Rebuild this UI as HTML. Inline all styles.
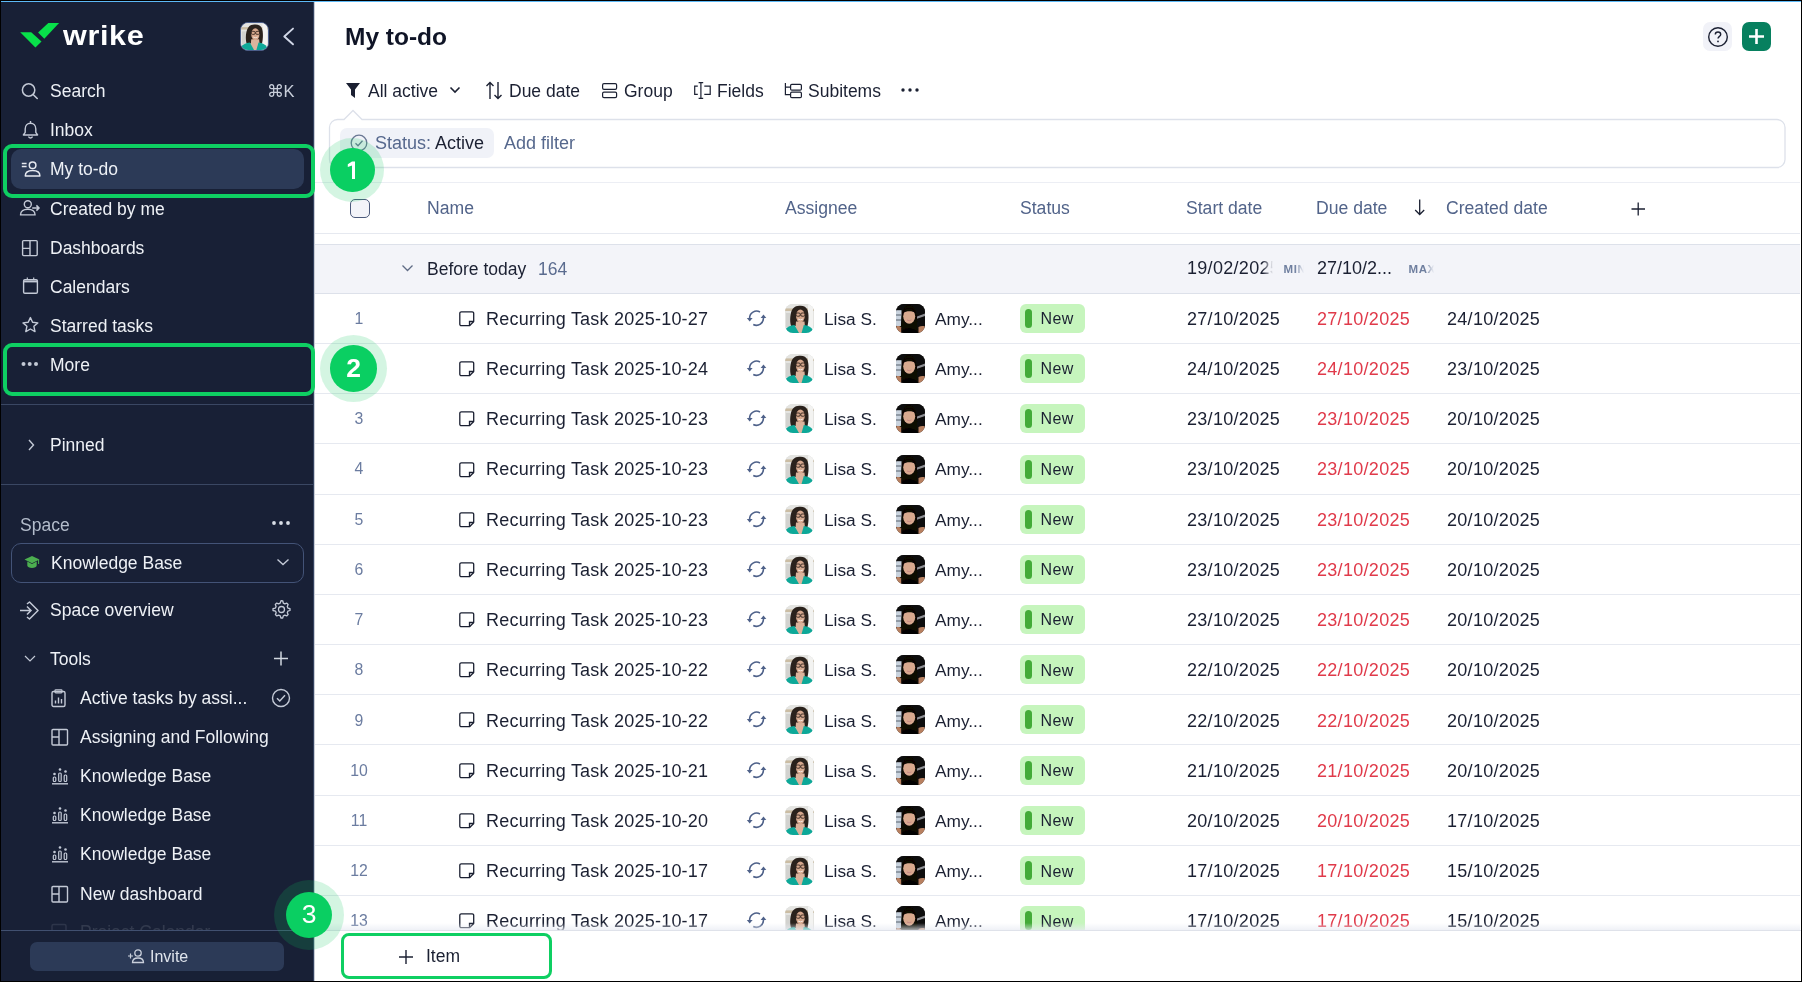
<!DOCTYPE html><html><head><meta charset="utf-8"><title>My to-do</title><style>
*{margin:0;padding:0;box-sizing:border-box}
html,body{width:1802px;height:982px;overflow:hidden;background:#000}
body{font-family:"Liberation Sans",sans-serif;position:relative}
#frame{will-change:transform}
.a{position:absolute}
.t{position:absolute;white-space:nowrap;line-height:20px;height:20px}
#frame{position:absolute;left:0;top:0;width:1802px;height:982px;background:#fff;overflow:hidden}
#bord{position:absolute;left:0;top:0;width:1802px;height:982px;border:1px solid #000;z-index:99;pointer-events:none}
#topline{position:absolute;left:0;top:1px;width:1802px;height:1px;background:#5cb9f6;z-index:50}
#sb{position:absolute;left:0;top:0;width:314px;height:982px;background:#182036;overflow:hidden;border-right:1px solid #34425f}
#sbedge{position:absolute;left:314px;top:0;width:1px;height:982px;background:#c9cdd6}
.sbt{color:#eef1f6;font-size:17.5px}
.mt{color:#1b2032;font-size:18px}
.gb{color:#56688d}
svg{position:absolute;overflow:visible}
</style></head><body><svg width="0" height="0" style="position:absolute"><defs><filter id="blr" x="-5%" y="-5%" width="110%" height="110%"><feGaussianBlur stdDeviation="0.5"/></filter></defs></svg><div id="frame"><div id="bord"></div><div id="topline"></div><div id="sb"><svg style="left:0;top:0" width="160" height="60"><polygon points="20.2,32.2 31.2,32.2 41.5,41.6 35.4,47.6" fill="#08e04a"/><polygon points="38.1,32.5 48.3,23.1 59.1,23.1 44.3,38.7" fill="#08e04a"/></svg><div class="t" style="left:63px;top:22.6px;height:26px;line-height:26px;font-size:28px;font-weight:bold;color:#fff;letter-spacing:0.6px;transform:scaleX(1.09);transform-origin:left">wrike</div><div class="a" style="left:240px;top:22px;width:29px;height:29px;border-radius:8px;background:#cfd3d6;overflow:hidden;border:1.2px solid #4a5d8a"><svg style="left:0;top:0" width="100%" height="100%" viewBox="0 0 29 29" preserveAspectRatio="none"><g filter="url(#blr)"><rect width="29" height="29" fill="#e4e4e1"/><rect x="0" y="4.4" width="29" height="2.6" fill="#cbbda4"/><rect x="23" y="0" width="5" height="29" fill="#f3f3f1"/><rect x="1" y="9" width="4" height="14" fill="#d2d2cf"/><path d="M6 22 C4.5 17 5 8 8 4.5 C10 2 13 1.5 15 1.7 C18.5 1.5 21.5 3 22.5 6 C24 10 23.8 17 22.5 22 Z" fill="#2b211c"/><path d="M10 29 L11 17.5 L19.5 17.5 L20.5 29 Z" fill="#dcb49d"/><ellipse cx="15.4" cy="12" rx="4.4" ry="6.4" fill="#d6a88d"/><rect x="11" y="9" width="4.2" height="3.2" rx="1.2" stroke="#33261f" stroke-width="0.9" fill="none"/><rect x="15.8" y="9" width="4.2" height="3.2" rx="1.2" stroke="#33261f" stroke-width="0.9" fill="none"/><path d="M13 15 Q15.5 16.6 18 15" stroke="#f3e6df" stroke-width="1" fill="none"/><path d="M0 29 V26 C2 23 5 21.5 9.5 21 L14 29 Z" fill="#0fa898"/><path d="M18.8 21 C23 21.5 26 23 28 26 V29 H16.5 Z" fill="#0fa898"/></g></svg></div><svg style="left:280px;top:24px" width="20" height="26"><path d="M13 4.6 L4.3 12.5 L13 20.3" stroke="#d0d6e6" stroke-width="1.9" fill="none" stroke-linecap="round" stroke-linejoin="round"/></svg><svg style="left:0;top:0" width="60" height="982"><circle cx="28.6" cy="90" r="6.2" stroke="#c3c9d6" stroke-width="1.5" fill="none"/><path d="M33.1 94.5 L37.2 98.5" stroke="#c3c9d6" stroke-width="1.6" stroke-linecap="round"/></svg><div class="t sbt" style="left:50px;top:80.5px;">Search</div><div class="t sbt" style="left:266.5px;top:81.3px;color:#c9cfdb;font-size:16.5px">&#8984;K</div><svg style="left:0;top:0" width="60" height="982"><path d="M25.2 129 C25.2 125.5 27.5 123.3 30.5 123.3 C33.5 123.3 35.8 125.5 35.8 129 V132.3 L37.6 135 H23.4 L25.2 132.3 Z" stroke="#c3c9d6" stroke-width="1.4" fill="none" stroke-linejoin="round"/><path d="M28.4 136.6 Q30.5 139.3 32.6 136.6" stroke="#c3c9d6" stroke-width="1.4" fill="none"/><path d="M30.5 121 V123.3" stroke="#c3c9d6" stroke-width="1.4"/></svg><div class="t sbt" style="left:50px;top:120px;">Inbox</div><div class="a" style="left:11px;top:149px;width:292.5px;height:39.5px;border-radius:10px;background:#2c3a57"></div><svg style="left:0;top:0" width="60" height="982"><path d="M21.8 163.6 H26.6 M21.8 166.4 H26.6" stroke="#e6e9f0" stroke-width="1.5"/><circle cx="32.6" cy="165.2" r="3.3" stroke="#e6e9f0" stroke-width="1.5" fill="none"/><path d="M25.3 176 C25.3 172.5 28.5 170.6 32.6 170.6 C36.7 170.6 39.9 172.5 39.9 176 Z" stroke="#e6e9f0" stroke-width="1.5" fill="none" stroke-linejoin="round"/></svg><div class="t sbt" style="left:50px;top:159.1px;">My to-do</div><svg style="left:0;top:0" width="60" height="982"><circle cx="27.8" cy="204.2" r="3.5" stroke="#c3c9d6" stroke-width="1.4" fill="none"/><path d="M20.5 214.9 C20.5 211.2 23.7 209.2 27.8 209.2 C31.9 209.2 35.1 211.2 35.1 214.9 Z" stroke="#c3c9d6" stroke-width="1.4" fill="none" stroke-linejoin="round"/><path d="M32.2 208 H39 M36.4 205.4 L39 208 L36.4 210.6" stroke="#c3c9d6" stroke-width="1.5" fill="none"/></svg><div class="t sbt" style="left:50px;top:198.5px;">Created by me</div><svg style="left:0;top:0" width="60" height="982"><rect x="22.6" y="240.6" width="14.6" height="15" rx="1" stroke="#c3c9d6" stroke-width="1.4" fill="none"/><path d="M30 240.6 V255.6 M22.6 248.4 H30" stroke="#c3c9d6" stroke-width="1.4"/></svg><div class="t sbt" style="left:50px;top:237.5px;">Dashboards</div><svg style="left:0;top:0" width="60" height="982"><rect x="23.6" y="279.6" width="13.8" height="13.6" rx="1.3" stroke="#c3c9d6" stroke-width="1.4" fill="none"/><path d="M23.6 281.4 H37.4" stroke="#c3c9d6" stroke-width="2"/><path d="M27.3 277.6 V280 M33.7 277.6 V280" stroke="#c3c9d6" stroke-width="1.2"/></svg><div class="t sbt" style="left:50px;top:276.5px;">Calendars</div><svg style="left:0;top:0" width="60" height="982"><path d="M30.4 317.6 L32.6 322.3 L37.8 322.9 L33.9 326.3 L35 331.6 L30.4 329 L25.8 331.6 L26.9 326.3 L23 322.9 L28.2 322.3 Z" stroke="#c3c9d6" stroke-width="1.4" fill="none" stroke-linejoin="round"/></svg><div class="t sbt" style="left:50px;top:315.6px;">Starred tasks</div><svg style="left:0;top:0" width="60" height="982"><circle cx="23.5" cy="364" r="2" fill="#c3c9d6"/><circle cx="29.7" cy="364" r="2" fill="#c3c9d6"/><circle cx="36" cy="364" r="2" fill="#c3c9d6"/></svg><div class="t sbt" style="left:50px;top:355.2px;">More</div><div class="a" style="left:0;top:404px;width:313px;height:1px;background:#3a4763"></div><svg style="left:26px;top:437.50px" width="10" height="14"><path d="M3 2 L7.5 7 L3 12" stroke="#c3c9d6" stroke-width="1.4" fill="none"/></svg><div class="t sbt" style="left:50px;top:434.5px;">Pinned</div><div class="a" style="left:0;top:484px;width:313px;height:1px;background:#3a4763"></div><div class="t sbt" style="left:20px;top:514.5px;color:#b3bccb">Space</div><svg style="left:271px;top:518px" width="20" height="10"><circle cx="3" cy="5" r="1.9" fill="#d9dee7"/><circle cx="10" cy="5" r="1.9" fill="#d9dee7"/><circle cx="17" cy="5" r="1.9" fill="#d9dee7"/></svg><div class="a" style="left:11px;top:542.5px;width:292.5px;height:40px;border-radius:10px;border:1.8px solid #435377"></div><svg style="left:23.5px;top:555px" width="18" height="16"><path d="M0.5 4.6 L8 1 L15.5 4.6 L8 8.2 Z" fill="#4caf50"/><path d="M3.3 6.6 V10.5 C3.3 12 5.5 13 8 13 C10.5 13 12.7 12 12.7 10.5 V6.6 L8 8.9 Z" fill="#4caf50"/><path d="M14.6 5 V9" stroke="#4caf50" stroke-width="1"/></svg><div class="t sbt" style="left:51px;top:553px;">Knowledge Base</div><svg style="left:276px;top:558px" width="14" height="8"><path d="M1.5 1.5 L7 6.5 L12.5 1.5" stroke="#c3c9d6" stroke-width="1.4" fill="none"/></svg><svg style="left:19px;top:600.50px" width="22" height="19"><path d="M1 9.5 H12 M8 5.5 L12 9.5 L8 13.5" stroke="#c3c9d6" stroke-width="1.5" fill="none"/><path d="M8 3 L10.5 1 L19 9.5 L10.5 18 L8 16" stroke="#c3c9d6" stroke-width="1.5" fill="none" stroke-linejoin="round"/></svg><div class="t sbt" style="left:50px;top:599.5px;">Space overview</div><svg style="left:272px;top:600px" width="19" height="19"><path d="M9.5 1.2 L11.3 1.5 L11.8 3.6 L13.3 4.4 L15.3 3.6 L16.6 5 L15.8 7 L16.4 8.6 L18.5 9.2 L18.5 11 L16.4 11.6 L15.8 13.2 L16.6 15.1 L15.2 16.4 L13.3 15.6 L11.8 16.3 L11.2 18.5 L9.4 18.5 L8.8 16.3 L7.2 15.6 L5.3 16.4 L3.9 15.1 L4.7 13.2 L4 11.6 L1.5 11 L1.5 9.2 L3.9 8.6 L4.6 7 L3.8 5 L5.1 3.6 L7.1 4.4 L8.7 3.6 Z" stroke="#c3c9d6" stroke-width="1.3" fill="none" stroke-linejoin="round" transform="translate(-0.5,-0.5)"/><circle cx="9.5" cy="9.5" r="3" stroke="#c3c9d6" stroke-width="1.3" fill="none"/></svg><svg style="left:24px;top:654.50px" width="12" height="8"><path d="M1 1 L6 6 L11 1" stroke="#c3c9d6" stroke-width="1.2" fill="none"/></svg><div class="t sbt" style="left:50px;top:648.5px;">Tools</div><svg style="left:274px;top:650.5px" width="16" height="16"><path d="M7 0.5 V14.5 M0 7.5 H14" stroke="#d0d6e0" stroke-width="1.5"/></svg><svg style="left:51px;top:689.0px" width="16" height="19"><rect x="1" y="2.5" width="13" height="15" rx="1.5" stroke="#c3c9d6" stroke-width="1.4" fill="none"/><rect x="4" y="0.8" width="7" height="3" rx="0.8" stroke="#c3c9d6" stroke-width="1.2" fill="none"/><path d="M4.5 14.5 V11.5 M7.5 14.5 V8.5 M10.5 14.5 V10" stroke="#c3c9d6" stroke-width="1.4"/></svg><div class="t sbt" style="left:80px;top:688.0px;">Active tasks by assi...</div><svg style="left:271px;top:688px" width="20" height="20"><circle cx="10" cy="10" r="8.5" stroke="#c3c9d6" stroke-width="1.4" fill="none"/><path d="M6 10.2 L8.8 13 L14 7.3" stroke="#c3c9d6" stroke-width="1.5" fill="none"/></svg><svg style="left:51px;top:728.1px" width="18" height="18"><rect x="1" y="1.5" width="15.5" height="15.5" stroke="#c3c9d6" stroke-width="1.4" fill="none" rx="1"/><path d="M8 1.5 V17 M1 9 H8" stroke="#c3c9d6" stroke-width="1.4"/></svg><div class="t sbt" style="left:80px;top:727.1px;">Assigning and Following</div><svg style="left:51px;top:767.2px" width="18" height="18"><circle cx="3.5" cy="7" r="1.3" fill="#c3c9d6"/><circle cx="9" cy="2.5" r="1.3" fill="#c3c9d6"/><circle cx="14.5" cy="4.5" r="1.3" fill="#c3c9d6"/><rect x="2.3" y="10" width="2.5" height="4.5" rx="1" stroke="#c3c9d6" stroke-width="1.2" fill="none"/><rect x="7.7" y="6" width="2.5" height="8.5" rx="1" stroke="#c3c9d6" stroke-width="1.2" fill="none"/><rect x="13.2" y="8" width="2.5" height="6.5" rx="1" stroke="#c3c9d6" stroke-width="1.2" fill="none"/><path d="M1 16.8 H17" stroke="#c3c9d6" stroke-width="1.4"/></svg><div class="t sbt" style="left:80px;top:766.2px;">Knowledge Base</div><svg style="left:51px;top:806.3px" width="18" height="18"><circle cx="3.5" cy="7" r="1.3" fill="#c3c9d6"/><circle cx="9" cy="2.5" r="1.3" fill="#c3c9d6"/><circle cx="14.5" cy="4.5" r="1.3" fill="#c3c9d6"/><rect x="2.3" y="10" width="2.5" height="4.5" rx="1" stroke="#c3c9d6" stroke-width="1.2" fill="none"/><rect x="7.7" y="6" width="2.5" height="8.5" rx="1" stroke="#c3c9d6" stroke-width="1.2" fill="none"/><rect x="13.2" y="8" width="2.5" height="6.5" rx="1" stroke="#c3c9d6" stroke-width="1.2" fill="none"/><path d="M1 16.8 H17" stroke="#c3c9d6" stroke-width="1.4"/></svg><div class="t sbt" style="left:80px;top:805.3px;">Knowledge Base</div><svg style="left:51px;top:845.4px" width="18" height="18"><circle cx="3.5" cy="7" r="1.3" fill="#c3c9d6"/><circle cx="9" cy="2.5" r="1.3" fill="#c3c9d6"/><circle cx="14.5" cy="4.5" r="1.3" fill="#c3c9d6"/><rect x="2.3" y="10" width="2.5" height="4.5" rx="1" stroke="#c3c9d6" stroke-width="1.2" fill="none"/><rect x="7.7" y="6" width="2.5" height="8.5" rx="1" stroke="#c3c9d6" stroke-width="1.2" fill="none"/><rect x="13.2" y="8" width="2.5" height="6.5" rx="1" stroke="#c3c9d6" stroke-width="1.2" fill="none"/><path d="M1 16.8 H17" stroke="#c3c9d6" stroke-width="1.4"/></svg><div class="t sbt" style="left:80px;top:844.4px;">Knowledge Base</div><svg style="left:51px;top:884.5px" width="18" height="18"><rect x="1" y="1.5" width="15.5" height="15.5" stroke="#c3c9d6" stroke-width="1.4" fill="none" rx="1"/><path d="M8 1.5 V17 M1 9 H8" stroke="#c3c9d6" stroke-width="1.4"/></svg><div class="t sbt" style="left:80px;top:883.5px;">New dashboard</div><div class="a" style="left:0;top:918px;width:313px;height:14px;overflow:hidden;opacity:0.12"><svg style="left:51px;top:4px" width="18" height="18"><rect x="1" y="2.5" width="14" height="13.5" stroke="#c3c9d6" stroke-width="1.5" fill="none" rx="1.5"/></svg><div class="t sbt" style="left:80px;top:4px;">Project Calendar</div></div><div class="a" style="left:0;top:930px;width:314px;height:52px;background:#182036;border-top:1px solid #415070"></div><div class="a" style="left:30px;top:942px;width:253.5px;height:29px;border-radius:7px;background:#2c3a57"></div><svg style="left:127px;top:948px" width="18" height="16"><path d="M1 8 H6 M3.5 5.5 V10.5" stroke="#c9cfdb" stroke-width="1.2"/><circle cx="11" cy="5" r="3.2" stroke="#c9cfdb" stroke-width="1.3" fill="none"/><path d="M5.5 14.5 C5.5 11 8 10 11 10 C14 10 16.5 11 16.5 14.5 Z" stroke="#c9cfdb" stroke-width="1.3" fill="none"/></svg><div class="t sbt" style="left:150px;top:946.5px;font-size:16px;color:#dfe4ec">Invite</div></div><div id="sbedge"></div><div class="a" style="left:3px;top:144px;width:312px;height:53.7px;border:4.4px solid #0ecf62;border-radius:9px"></div><div class="a" style="left:3px;top:342.5px;width:312px;height:53.5px;border:4.4px solid #0ecf62;border-radius:9px"></div><div class="t " style="left:345px;top:26px;font-size:24.5px;font-weight:bold;color:#0f1426;height:30px;line-height:30px;top:22px">My to-do</div><div class="a" style="left:1703px;top:22px;width:29px;height:29px;border-radius:7px;background:#f1f2f8"></div><svg style="left:1706.7px;top:25.7px" width="22" height="22"><circle cx="11" cy="11" r="9.3" stroke="#1b2032" stroke-width="1.4" fill="none"/><path d="M8.3 8.6 C8.3 6.8 9.6 6 11 6 C12.6 6 13.7 7 13.7 8.4 C13.7 10.3 11 10.4 11 12.6" stroke="#1b2032" stroke-width="1.4" fill="none"/><circle cx="11" cy="15.4" r="0.9" fill="#1b2032"/></svg><div class="a" style="left:1742.2px;top:22px;width:29.2px;height:29px;border-radius:7px;background:#07805f"></div><svg style="left:1747px;top:27px" width="19" height="19"><path d="M9.5 2 V17 M2 9.5 H17" stroke="#fff" stroke-width="2.6"/></svg><svg style="left:345px;top:82px" width="16" height="17"><path d="M1 1 H15 L10 7.5 V16 L6 13 V7.5 Z" fill="#1b2032"/></svg><div class="t mt" style="left:368px;top:80.7px;font-size:17.5px">All active</div><svg style="left:449px;top:86px" width="12" height="8"><path d="M1.5 1.5 L6 6 L10.5 1.5" stroke="#1b2032" stroke-width="1.6" fill="none"/></svg><svg style="left:485px;top:81px" width="19" height="19"><path d="M5 18 V1.5 M1.5 5 L5 1.5 L8.5 5" stroke="#1b2032" stroke-width="1.4" fill="none"/><path d="M13 1 V17.5 M9.5 14 L13 17.5 L16.5 14" stroke="#1b2032" stroke-width="1.4" fill="none"/></svg><div class="t mt" style="left:509px;top:80.7px;font-size:17.5px">Due date</div><svg style="left:0;top:0" width="1000" height="110"><rect x="602.6" y="83.6" width="14" height="5.8" rx="1.4" stroke="#1b2032" stroke-width="1.2" fill="none"/><rect x="602.6" y="92.2" width="14" height="5.4" rx="1.4" stroke="#1b2032" stroke-width="1.2" fill="none"/></svg><div class="t mt" style="left:624px;top:80.7px;font-size:17.5px">Group</div><svg style="left:0;top:0" width="1000" height="110"><path d="M697.8 86.2 H694.7 V94.4 H697.8" stroke="#1b2032" stroke-width="1.2" fill="none"/><path d="M704.3 86.2 H710.2 V94.4 H704.3" stroke="#1b2032" stroke-width="1.2" fill="none"/><path d="M700.9 82.6 V98.3 M698.6 82.6 H703.2 M698.6 98.3 H703.2" stroke="#1b2032" stroke-width="1.2" fill="none"/></svg><div class="t mt" style="left:717px;top:80.7px;font-size:17.5px">Fields</div><svg style="left:0;top:0" width="1000" height="110"><path d="M785.4 83 V94.6 H790.6 M785.4 87.2 H790.6" stroke="#1b2032" stroke-width="1.2" fill="none"/><rect x="790.6" y="84.3" width="10.8" height="5.8" rx="1.2" stroke="#1b2032" stroke-width="1.2" fill="none"/><rect x="790.6" y="92.2" width="10.8" height="5.4" rx="1.2" stroke="#1b2032" stroke-width="1.2" fill="none"/></svg><div class="t mt" style="left:808px;top:80.7px;font-size:17.5px">Subitems</div><svg style="left:901px;top:85px" width="18" height="10"><circle cx="2" cy="5" r="1.7" fill="#1b2032"/><circle cx="9" cy="5" r="1.7" fill="#1b2032"/><circle cx="16" cy="5" r="1.7" fill="#1b2032"/></svg><svg style="left:329px;top:107px" width="1458" height="62"><path d="M8.5 12.5 H15 L24 3.5 L33 12.5 H1448 A8 8 0 0 1 1456 20.5 V52.5 A8 8 0 0 1 1448 60.5 H8.5 A8 8 0 0 1 0.5 52.5 V20.5 A8 8 0 0 1 8.5 12.5 Z" stroke="#dde1ea" stroke-width="1.3" fill="#fff"/></svg><div class="a" style="left:340px;top:128px;width:154px;height:30px;border-radius:7px;background:#f0f2f8"></div><svg style="left:350px;top:134px" width="18" height="18"><circle cx="9" cy="9" r="7.8" stroke="#6a7894" stroke-width="1.3" fill="none"/><path d="M5.5 9.2 L8 11.7 L12.5 6.7" stroke="#6a7894" stroke-width="1.3" fill="none"/></svg><div class="t mt gb" style="left:375px;top:133px;">Status: <span style="color:#1b2032">Active</span></div><div class="t mt gb" style="left:504px;top:133px;">Add filter</div><div class="a" style="left:315px;top:182px;width:1485px;height:1px;background:#eceef4"></div><div class="a" style="left:350px;top:198.5px;width:19.5px;height:19px;border:1.5px solid #4d5b7c;border-radius:5px;background:#f3f4f9"></div><div class="t mt gb" style="left:427px;top:197.9px;font-size:17.6px;color:#52648a">Name</div><div class="t mt gb" style="left:785px;top:197.9px;font-size:17.6px;color:#52648a">Assignee</div><div class="t mt gb" style="left:1020px;top:197.9px;font-size:17.6px;color:#52648a">Status</div><div class="t mt gb" style="left:1186px;top:197.9px;font-size:17.6px;color:#52648a">Start date</div><div class="t mt gb" style="left:1316px;top:197.9px;font-size:17.6px;color:#52648a">Due date</div><div class="t mt gb" style="left:1446px;top:197.9px;font-size:17.6px;color:#52648a">Created date</div><svg style="left:1414px;top:199px" width="12" height="18"><path d="M5.7 0.5 V15.5 M1.2 11 L5.7 15.5 L10.2 11" stroke="#1b2032" stroke-width="1.3" fill="none"/></svg><svg style="left:1630.5px;top:201.5px" width="15" height="15"><path d="M7.2 0.5 V13.5 M0.5 7 H14" stroke="#1b2032" stroke-width="1.3"/></svg><div class="a" style="left:315px;top:233px;width:1485px;height:1px;background:#e6e9f0"></div><div class="a" style="left:315px;top:244px;width:1485px;height:50px;background:#f3f4f9;border-top:1px solid #dde1ea;border-bottom:1px solid #dde1ea"></div><svg style="left:401px;top:264px" width="13" height="8"><path d="M1.5 1.5 L6.5 6.5 L11.5 1.5" stroke="#5f6b85" stroke-width="1.3" fill="none"/></svg><div class="t mt" style="left:427px;top:258.5px;font-size:17.5px">Before today</div><div class="t mt gb" style="left:538px;top:258.5px;font-size:17.5px;color:#5a6b8f">164</div><div class="a" style="left:1187px;top:258px;width:86px;height:20px;overflow:hidden;-webkit-mask-image:linear-gradient(to right,#000 88%,transparent)"><div class="t mt" style="left:0;top:0;letter-spacing:0.3px">19/02/2025</div></div><div class="t " style="left:1283.5px;top:258.5px;font-size:11.5px;color:#6f7f9f;width:20px;overflow:hidden;font-weight:bold;letter-spacing:0.6px;-webkit-mask-image:linear-gradient(to right,#000 55%,transparent)">MIN</div><div class="t mt" style="left:1317px;top:258px;">27/10/2...</div><div class="t " style="left:1408.5px;top:258.5px;font-size:11.5px;color:#6f7f9f;width:25px;overflow:hidden;font-weight:bold;letter-spacing:0.6px;-webkit-mask-image:linear-gradient(to right,#000 65%,transparent)">MAX</div><div class="t " style="left:349px;top:308.7px;font-size:15.8px;color:#6b7ca0;width:20px;text-align:center">1</div><svg style="left:458.5px;top:310.5px" width="17" height="16"><path d="M2.3 0.8 H13.2 A1.5 1.5 0 0 1 14.7 2.3 V10.5 L10.5 14.7 H2.3 A1.5 1.5 0 0 1 0.8 13.2 V2.3 A1.5 1.5 0 0 1 2.3 0.8 Z" stroke="#1b2032" stroke-width="1.3" fill="none" stroke-linejoin="round"/><path d="M14.7 10.5 H10.5 V14.7" stroke="#1b2032" stroke-width="1.3" fill="none"/></svg><div class="t mt" style="left:486px;top:308.7px;letter-spacing:0.22px">Recurring Task 2025-10-27</div><svg style="left:746px;top:304px" width="22" height="24"><path d="M14 8 A7 7 0 0 0 3.6 14.2" stroke="#4e6189" stroke-width="1.6" fill="none"/><path d="M7.25 20.5 A7 7 0 0 0 17.4 13.6" stroke="#4e6189" stroke-width="1.6" fill="none"/><path d="M0.8 14 L6.6 14 L3.7 17.6 Z" fill="#4e6189"/><path d="M14.6 13.9 L20.3 13.9 L17.5 10.6 Z" fill="#4e6189"/></svg><div class="a" style="left:785px;top:304px;width:29px;height:29px;border-radius:8px;overflow:hidden;background:#d7d9d8"><svg style="left:0;top:0" width="100%" height="100%" viewBox="0 0 29 29" preserveAspectRatio="none"><g filter="url(#blr)"><rect width="29" height="29" fill="#e4e4e1"/><rect x="0" y="4.4" width="29" height="2.6" fill="#cbbda4"/><rect x="23" y="0" width="5" height="29" fill="#f3f3f1"/><rect x="1" y="9" width="4" height="14" fill="#d2d2cf"/><path d="M6 22 C4.5 17 5 8 8 4.5 C10 2 13 1.5 15 1.7 C18.5 1.5 21.5 3 22.5 6 C24 10 23.8 17 22.5 22 Z" fill="#2b211c"/><path d="M10 29 L11 17.5 L19.5 17.5 L20.5 29 Z" fill="#dcb49d"/><ellipse cx="15.4" cy="12" rx="4.4" ry="6.4" fill="#d6a88d"/><rect x="11" y="9" width="4.2" height="3.2" rx="1.2" stroke="#33261f" stroke-width="0.9" fill="none"/><rect x="15.8" y="9" width="4.2" height="3.2" rx="1.2" stroke="#33261f" stroke-width="0.9" fill="none"/><path d="M13 15 Q15.5 16.6 18 15" stroke="#f3e6df" stroke-width="1" fill="none"/><path d="M0 29 V26 C2 23 5 21.5 9.5 21 L14 29 Z" fill="#0fa898"/><path d="M18.8 21 C23 21.5 26 23 28 26 V29 H16.5 Z" fill="#0fa898"/></g></svg></div><div class="t mt" style="left:824px;top:308.7px;font-size:17.3px">Lisa S.</div><div class="a" style="left:896px;top:304px;width:29px;height:29px;border-radius:8px;overflow:hidden;background:#1a1614"><svg style="left:0;top:0" width="100%" height="100%" viewBox="0 0 29 29" preserveAspectRatio="none"><g filter="url(#blr)"><rect width="29" height="29" fill="#0c0908"/><rect x="0" y="6.2" width="5.5" height="15.8" fill="#c9d3de"/><path d="M0 11 H5.5 M0 16 H5.5" stroke="#56606b" stroke-width="1.2"/><path d="M21 12.5 L29 9.5 L29 12 L21 14.8 Z" fill="#8d8f94"/><path d="M5 29 C4.5 12 6.5 1 13 1 C20 1 22 12 21 29 Z" fill="#090706"/><ellipse cx="13.2" cy="12.3" rx="6" ry="7.5" fill="#d9a98e"/><path d="M7.2 9 C8.5 5 11 4 13.5 4 C16.5 4 18.5 5.5 19.3 9 C17 6.5 10 6.5 7.2 9 Z" fill="#090706"/><path d="M11 16 Q13.2 17.4 15.5 16" stroke="#c98a86" stroke-width="1" fill="none"/><path d="M0 29 V22.5 C2 21.8 4 22 5.2 23.5 V29 Z" fill="#b88060"/><path d="M22.5 29 V23 C24.5 22 27 21.8 29 22.5 V29 Z" fill="#b88060"/><path d="M5.5 29 C7 25.5 10 24.5 13 24.5 C16 24.5 19 25.5 22.5 29 Z" fill="#050505"/></g></svg></div><div class="t mt" style="left:935px;top:308.7px;font-size:17.3px">Amy...</div><div class="a" style="left:1020px;top:304px;width:65px;height:29px;border-radius:6px;background:#c6f5bd"></div><div class="a" style="left:1025px;top:308.5px;width:7px;height:19.5px;border-radius:3.5px;background:#43ab38"></div><div class="t mt" style="left:1040.5px;top:309.0px;font-size:16px;letter-spacing:0.4px">New</div><div class="t mt" style="left:1187px;top:308.7px;letter-spacing:0.3px">27/10/2025</div><div class="t mt" style="left:1317px;top:308.7px;letter-spacing:0.3px;color:#e03a4a">27/10/2025</div><div class="t mt" style="left:1447px;top:308.7px;letter-spacing:0.3px">24/10/2025</div><div class="a" style="left:315px;top:343px;width:1485px;height:1px;background:#e6e9f0"></div><div class="t " style="left:349px;top:358.93px;font-size:15.8px;color:#6b7ca0;width:20px;text-align:center">2</div><svg style="left:458.5px;top:360.5px" width="17" height="16"><path d="M2.3 0.8 H13.2 A1.5 1.5 0 0 1 14.7 2.3 V10.5 L10.5 14.7 H2.3 A1.5 1.5 0 0 1 0.8 13.2 V2.3 A1.5 1.5 0 0 1 2.3 0.8 Z" stroke="#1b2032" stroke-width="1.3" fill="none" stroke-linejoin="round"/><path d="M14.7 10.5 H10.5 V14.7" stroke="#1b2032" stroke-width="1.3" fill="none"/></svg><div class="t mt" style="left:486px;top:358.93px;letter-spacing:0.22px">Recurring Task 2025-10-24</div><svg style="left:746px;top:354px" width="22" height="24"><path d="M14 8 A7 7 0 0 0 3.6 14.2" stroke="#4e6189" stroke-width="1.6" fill="none"/><path d="M7.25 20.5 A7 7 0 0 0 17.4 13.6" stroke="#4e6189" stroke-width="1.6" fill="none"/><path d="M0.8 14 L6.6 14 L3.7 17.6 Z" fill="#4e6189"/><path d="M14.6 13.9 L20.3 13.9 L17.5 10.6 Z" fill="#4e6189"/></svg><div class="a" style="left:785px;top:354px;width:29px;height:29px;border-radius:8px;overflow:hidden;background:#d7d9d8"><svg style="left:0;top:0" width="100%" height="100%" viewBox="0 0 29 29" preserveAspectRatio="none"><g filter="url(#blr)"><rect width="29" height="29" fill="#e4e4e1"/><rect x="0" y="4.4" width="29" height="2.6" fill="#cbbda4"/><rect x="23" y="0" width="5" height="29" fill="#f3f3f1"/><rect x="1" y="9" width="4" height="14" fill="#d2d2cf"/><path d="M6 22 C4.5 17 5 8 8 4.5 C10 2 13 1.5 15 1.7 C18.5 1.5 21.5 3 22.5 6 C24 10 23.8 17 22.5 22 Z" fill="#2b211c"/><path d="M10 29 L11 17.5 L19.5 17.5 L20.5 29 Z" fill="#dcb49d"/><ellipse cx="15.4" cy="12" rx="4.4" ry="6.4" fill="#d6a88d"/><rect x="11" y="9" width="4.2" height="3.2" rx="1.2" stroke="#33261f" stroke-width="0.9" fill="none"/><rect x="15.8" y="9" width="4.2" height="3.2" rx="1.2" stroke="#33261f" stroke-width="0.9" fill="none"/><path d="M13 15 Q15.5 16.6 18 15" stroke="#f3e6df" stroke-width="1" fill="none"/><path d="M0 29 V26 C2 23 5 21.5 9.5 21 L14 29 Z" fill="#0fa898"/><path d="M18.8 21 C23 21.5 26 23 28 26 V29 H16.5 Z" fill="#0fa898"/></g></svg></div><div class="t mt" style="left:824px;top:358.93px;font-size:17.3px">Lisa S.</div><div class="a" style="left:896px;top:354px;width:29px;height:29px;border-radius:8px;overflow:hidden;background:#1a1614"><svg style="left:0;top:0" width="100%" height="100%" viewBox="0 0 29 29" preserveAspectRatio="none"><g filter="url(#blr)"><rect width="29" height="29" fill="#0c0908"/><rect x="0" y="6.2" width="5.5" height="15.8" fill="#c9d3de"/><path d="M0 11 H5.5 M0 16 H5.5" stroke="#56606b" stroke-width="1.2"/><path d="M21 12.5 L29 9.5 L29 12 L21 14.8 Z" fill="#8d8f94"/><path d="M5 29 C4.5 12 6.5 1 13 1 C20 1 22 12 21 29 Z" fill="#090706"/><ellipse cx="13.2" cy="12.3" rx="6" ry="7.5" fill="#d9a98e"/><path d="M7.2 9 C8.5 5 11 4 13.5 4 C16.5 4 18.5 5.5 19.3 9 C17 6.5 10 6.5 7.2 9 Z" fill="#090706"/><path d="M11 16 Q13.2 17.4 15.5 16" stroke="#c98a86" stroke-width="1" fill="none"/><path d="M0 29 V22.5 C2 21.8 4 22 5.2 23.5 V29 Z" fill="#b88060"/><path d="M22.5 29 V23 C24.5 22 27 21.8 29 22.5 V29 Z" fill="#b88060"/><path d="M5.5 29 C7 25.5 10 24.5 13 24.5 C16 24.5 19 25.5 22.5 29 Z" fill="#050505"/></g></svg></div><div class="t mt" style="left:935px;top:358.93px;font-size:17.3px">Amy...</div><div class="a" style="left:1020px;top:354px;width:65px;height:29px;border-radius:6px;background:#c6f5bd"></div><div class="a" style="left:1025px;top:358.5px;width:7px;height:19.5px;border-radius:3.5px;background:#43ab38"></div><div class="t mt" style="left:1040.5px;top:359.23px;font-size:16px;letter-spacing:0.4px">New</div><div class="t mt" style="left:1187px;top:358.93px;letter-spacing:0.3px">24/10/2025</div><div class="t mt" style="left:1317px;top:358.93px;letter-spacing:0.3px;color:#e03a4a">24/10/2025</div><div class="t mt" style="left:1447px;top:358.93px;letter-spacing:0.3px">23/10/2025</div><div class="a" style="left:315px;top:393px;width:1485px;height:1px;background:#e6e9f0"></div><div class="t " style="left:349px;top:409.15999999999997px;font-size:15.8px;color:#6b7ca0;width:20px;text-align:center">3</div><svg style="left:458.5px;top:410.5px" width="17" height="16"><path d="M2.3 0.8 H13.2 A1.5 1.5 0 0 1 14.7 2.3 V10.5 L10.5 14.7 H2.3 A1.5 1.5 0 0 1 0.8 13.2 V2.3 A1.5 1.5 0 0 1 2.3 0.8 Z" stroke="#1b2032" stroke-width="1.3" fill="none" stroke-linejoin="round"/><path d="M14.7 10.5 H10.5 V14.7" stroke="#1b2032" stroke-width="1.3" fill="none"/></svg><div class="t mt" style="left:486px;top:409.15999999999997px;letter-spacing:0.22px">Recurring Task 2025-10-23</div><svg style="left:746px;top:404px" width="22" height="24"><path d="M14 8 A7 7 0 0 0 3.6 14.2" stroke="#4e6189" stroke-width="1.6" fill="none"/><path d="M7.25 20.5 A7 7 0 0 0 17.4 13.6" stroke="#4e6189" stroke-width="1.6" fill="none"/><path d="M0.8 14 L6.6 14 L3.7 17.6 Z" fill="#4e6189"/><path d="M14.6 13.9 L20.3 13.9 L17.5 10.6 Z" fill="#4e6189"/></svg><div class="a" style="left:785px;top:404px;width:29px;height:29px;border-radius:8px;overflow:hidden;background:#d7d9d8"><svg style="left:0;top:0" width="100%" height="100%" viewBox="0 0 29 29" preserveAspectRatio="none"><g filter="url(#blr)"><rect width="29" height="29" fill="#e4e4e1"/><rect x="0" y="4.4" width="29" height="2.6" fill="#cbbda4"/><rect x="23" y="0" width="5" height="29" fill="#f3f3f1"/><rect x="1" y="9" width="4" height="14" fill="#d2d2cf"/><path d="M6 22 C4.5 17 5 8 8 4.5 C10 2 13 1.5 15 1.7 C18.5 1.5 21.5 3 22.5 6 C24 10 23.8 17 22.5 22 Z" fill="#2b211c"/><path d="M10 29 L11 17.5 L19.5 17.5 L20.5 29 Z" fill="#dcb49d"/><ellipse cx="15.4" cy="12" rx="4.4" ry="6.4" fill="#d6a88d"/><rect x="11" y="9" width="4.2" height="3.2" rx="1.2" stroke="#33261f" stroke-width="0.9" fill="none"/><rect x="15.8" y="9" width="4.2" height="3.2" rx="1.2" stroke="#33261f" stroke-width="0.9" fill="none"/><path d="M13 15 Q15.5 16.6 18 15" stroke="#f3e6df" stroke-width="1" fill="none"/><path d="M0 29 V26 C2 23 5 21.5 9.5 21 L14 29 Z" fill="#0fa898"/><path d="M18.8 21 C23 21.5 26 23 28 26 V29 H16.5 Z" fill="#0fa898"/></g></svg></div><div class="t mt" style="left:824px;top:409.15999999999997px;font-size:17.3px">Lisa S.</div><div class="a" style="left:896px;top:404px;width:29px;height:29px;border-radius:8px;overflow:hidden;background:#1a1614"><svg style="left:0;top:0" width="100%" height="100%" viewBox="0 0 29 29" preserveAspectRatio="none"><g filter="url(#blr)"><rect width="29" height="29" fill="#0c0908"/><rect x="0" y="6.2" width="5.5" height="15.8" fill="#c9d3de"/><path d="M0 11 H5.5 M0 16 H5.5" stroke="#56606b" stroke-width="1.2"/><path d="M21 12.5 L29 9.5 L29 12 L21 14.8 Z" fill="#8d8f94"/><path d="M5 29 C4.5 12 6.5 1 13 1 C20 1 22 12 21 29 Z" fill="#090706"/><ellipse cx="13.2" cy="12.3" rx="6" ry="7.5" fill="#d9a98e"/><path d="M7.2 9 C8.5 5 11 4 13.5 4 C16.5 4 18.5 5.5 19.3 9 C17 6.5 10 6.5 7.2 9 Z" fill="#090706"/><path d="M11 16 Q13.2 17.4 15.5 16" stroke="#c98a86" stroke-width="1" fill="none"/><path d="M0 29 V22.5 C2 21.8 4 22 5.2 23.5 V29 Z" fill="#b88060"/><path d="M22.5 29 V23 C24.5 22 27 21.8 29 22.5 V29 Z" fill="#b88060"/><path d="M5.5 29 C7 25.5 10 24.5 13 24.5 C16 24.5 19 25.5 22.5 29 Z" fill="#050505"/></g></svg></div><div class="t mt" style="left:935px;top:409.15999999999997px;font-size:17.3px">Amy...</div><div class="a" style="left:1020px;top:404px;width:65px;height:29px;border-radius:6px;background:#c6f5bd"></div><div class="a" style="left:1025px;top:408.5px;width:7px;height:19.5px;border-radius:3.5px;background:#43ab38"></div><div class="t mt" style="left:1040.5px;top:409.46px;font-size:16px;letter-spacing:0.4px">New</div><div class="t mt" style="left:1187px;top:409.15999999999997px;letter-spacing:0.3px">23/10/2025</div><div class="t mt" style="left:1317px;top:409.15999999999997px;letter-spacing:0.3px;color:#e03a4a">23/10/2025</div><div class="t mt" style="left:1447px;top:409.15999999999997px;letter-spacing:0.3px">20/10/2025</div><div class="a" style="left:315px;top:443px;width:1485px;height:1px;background:#e6e9f0"></div><div class="t " style="left:349px;top:459.39px;font-size:15.8px;color:#6b7ca0;width:20px;text-align:center">4</div><svg style="left:458.5px;top:461.5px" width="17" height="16"><path d="M2.3 0.8 H13.2 A1.5 1.5 0 0 1 14.7 2.3 V10.5 L10.5 14.7 H2.3 A1.5 1.5 0 0 1 0.8 13.2 V2.3 A1.5 1.5 0 0 1 2.3 0.8 Z" stroke="#1b2032" stroke-width="1.3" fill="none" stroke-linejoin="round"/><path d="M14.7 10.5 H10.5 V14.7" stroke="#1b2032" stroke-width="1.3" fill="none"/></svg><div class="t mt" style="left:486px;top:459.39px;letter-spacing:0.22px">Recurring Task 2025-10-23</div><svg style="left:746px;top:455px" width="22" height="24"><path d="M14 8 A7 7 0 0 0 3.6 14.2" stroke="#4e6189" stroke-width="1.6" fill="none"/><path d="M7.25 20.5 A7 7 0 0 0 17.4 13.6" stroke="#4e6189" stroke-width="1.6" fill="none"/><path d="M0.8 14 L6.6 14 L3.7 17.6 Z" fill="#4e6189"/><path d="M14.6 13.9 L20.3 13.9 L17.5 10.6 Z" fill="#4e6189"/></svg><div class="a" style="left:785px;top:455px;width:29px;height:29px;border-radius:8px;overflow:hidden;background:#d7d9d8"><svg style="left:0;top:0" width="100%" height="100%" viewBox="0 0 29 29" preserveAspectRatio="none"><g filter="url(#blr)"><rect width="29" height="29" fill="#e4e4e1"/><rect x="0" y="4.4" width="29" height="2.6" fill="#cbbda4"/><rect x="23" y="0" width="5" height="29" fill="#f3f3f1"/><rect x="1" y="9" width="4" height="14" fill="#d2d2cf"/><path d="M6 22 C4.5 17 5 8 8 4.5 C10 2 13 1.5 15 1.7 C18.5 1.5 21.5 3 22.5 6 C24 10 23.8 17 22.5 22 Z" fill="#2b211c"/><path d="M10 29 L11 17.5 L19.5 17.5 L20.5 29 Z" fill="#dcb49d"/><ellipse cx="15.4" cy="12" rx="4.4" ry="6.4" fill="#d6a88d"/><rect x="11" y="9" width="4.2" height="3.2" rx="1.2" stroke="#33261f" stroke-width="0.9" fill="none"/><rect x="15.8" y="9" width="4.2" height="3.2" rx="1.2" stroke="#33261f" stroke-width="0.9" fill="none"/><path d="M13 15 Q15.5 16.6 18 15" stroke="#f3e6df" stroke-width="1" fill="none"/><path d="M0 29 V26 C2 23 5 21.5 9.5 21 L14 29 Z" fill="#0fa898"/><path d="M18.8 21 C23 21.5 26 23 28 26 V29 H16.5 Z" fill="#0fa898"/></g></svg></div><div class="t mt" style="left:824px;top:459.39px;font-size:17.3px">Lisa S.</div><div class="a" style="left:896px;top:455px;width:29px;height:29px;border-radius:8px;overflow:hidden;background:#1a1614"><svg style="left:0;top:0" width="100%" height="100%" viewBox="0 0 29 29" preserveAspectRatio="none"><g filter="url(#blr)"><rect width="29" height="29" fill="#0c0908"/><rect x="0" y="6.2" width="5.5" height="15.8" fill="#c9d3de"/><path d="M0 11 H5.5 M0 16 H5.5" stroke="#56606b" stroke-width="1.2"/><path d="M21 12.5 L29 9.5 L29 12 L21 14.8 Z" fill="#8d8f94"/><path d="M5 29 C4.5 12 6.5 1 13 1 C20 1 22 12 21 29 Z" fill="#090706"/><ellipse cx="13.2" cy="12.3" rx="6" ry="7.5" fill="#d9a98e"/><path d="M7.2 9 C8.5 5 11 4 13.5 4 C16.5 4 18.5 5.5 19.3 9 C17 6.5 10 6.5 7.2 9 Z" fill="#090706"/><path d="M11 16 Q13.2 17.4 15.5 16" stroke="#c98a86" stroke-width="1" fill="none"/><path d="M0 29 V22.5 C2 21.8 4 22 5.2 23.5 V29 Z" fill="#b88060"/><path d="M22.5 29 V23 C24.5 22 27 21.8 29 22.5 V29 Z" fill="#b88060"/><path d="M5.5 29 C7 25.5 10 24.5 13 24.5 C16 24.5 19 25.5 22.5 29 Z" fill="#050505"/></g></svg></div><div class="t mt" style="left:935px;top:459.39px;font-size:17.3px">Amy...</div><div class="a" style="left:1020px;top:455px;width:65px;height:29px;border-radius:6px;background:#c6f5bd"></div><div class="a" style="left:1025px;top:459.5px;width:7px;height:19.5px;border-radius:3.5px;background:#43ab38"></div><div class="t mt" style="left:1040.5px;top:459.69px;font-size:16px;letter-spacing:0.4px">New</div><div class="t mt" style="left:1187px;top:459.39px;letter-spacing:0.3px">23/10/2025</div><div class="t mt" style="left:1317px;top:459.39px;letter-spacing:0.3px;color:#e03a4a">23/10/2025</div><div class="t mt" style="left:1447px;top:459.39px;letter-spacing:0.3px">20/10/2025</div><div class="a" style="left:315px;top:494px;width:1485px;height:1px;background:#e6e9f0"></div><div class="t " style="left:349px;top:509.62px;font-size:15.8px;color:#6b7ca0;width:20px;text-align:center">5</div><svg style="left:458.5px;top:511.5px" width="17" height="16"><path d="M2.3 0.8 H13.2 A1.5 1.5 0 0 1 14.7 2.3 V10.5 L10.5 14.7 H2.3 A1.5 1.5 0 0 1 0.8 13.2 V2.3 A1.5 1.5 0 0 1 2.3 0.8 Z" stroke="#1b2032" stroke-width="1.3" fill="none" stroke-linejoin="round"/><path d="M14.7 10.5 H10.5 V14.7" stroke="#1b2032" stroke-width="1.3" fill="none"/></svg><div class="t mt" style="left:486px;top:509.62px;letter-spacing:0.22px">Recurring Task 2025-10-23</div><svg style="left:746px;top:505px" width="22" height="24"><path d="M14 8 A7 7 0 0 0 3.6 14.2" stroke="#4e6189" stroke-width="1.6" fill="none"/><path d="M7.25 20.5 A7 7 0 0 0 17.4 13.6" stroke="#4e6189" stroke-width="1.6" fill="none"/><path d="M0.8 14 L6.6 14 L3.7 17.6 Z" fill="#4e6189"/><path d="M14.6 13.9 L20.3 13.9 L17.5 10.6 Z" fill="#4e6189"/></svg><div class="a" style="left:785px;top:505px;width:29px;height:29px;border-radius:8px;overflow:hidden;background:#d7d9d8"><svg style="left:0;top:0" width="100%" height="100%" viewBox="0 0 29 29" preserveAspectRatio="none"><g filter="url(#blr)"><rect width="29" height="29" fill="#e4e4e1"/><rect x="0" y="4.4" width="29" height="2.6" fill="#cbbda4"/><rect x="23" y="0" width="5" height="29" fill="#f3f3f1"/><rect x="1" y="9" width="4" height="14" fill="#d2d2cf"/><path d="M6 22 C4.5 17 5 8 8 4.5 C10 2 13 1.5 15 1.7 C18.5 1.5 21.5 3 22.5 6 C24 10 23.8 17 22.5 22 Z" fill="#2b211c"/><path d="M10 29 L11 17.5 L19.5 17.5 L20.5 29 Z" fill="#dcb49d"/><ellipse cx="15.4" cy="12" rx="4.4" ry="6.4" fill="#d6a88d"/><rect x="11" y="9" width="4.2" height="3.2" rx="1.2" stroke="#33261f" stroke-width="0.9" fill="none"/><rect x="15.8" y="9" width="4.2" height="3.2" rx="1.2" stroke="#33261f" stroke-width="0.9" fill="none"/><path d="M13 15 Q15.5 16.6 18 15" stroke="#f3e6df" stroke-width="1" fill="none"/><path d="M0 29 V26 C2 23 5 21.5 9.5 21 L14 29 Z" fill="#0fa898"/><path d="M18.8 21 C23 21.5 26 23 28 26 V29 H16.5 Z" fill="#0fa898"/></g></svg></div><div class="t mt" style="left:824px;top:509.62px;font-size:17.3px">Lisa S.</div><div class="a" style="left:896px;top:505px;width:29px;height:29px;border-radius:8px;overflow:hidden;background:#1a1614"><svg style="left:0;top:0" width="100%" height="100%" viewBox="0 0 29 29" preserveAspectRatio="none"><g filter="url(#blr)"><rect width="29" height="29" fill="#0c0908"/><rect x="0" y="6.2" width="5.5" height="15.8" fill="#c9d3de"/><path d="M0 11 H5.5 M0 16 H5.5" stroke="#56606b" stroke-width="1.2"/><path d="M21 12.5 L29 9.5 L29 12 L21 14.8 Z" fill="#8d8f94"/><path d="M5 29 C4.5 12 6.5 1 13 1 C20 1 22 12 21 29 Z" fill="#090706"/><ellipse cx="13.2" cy="12.3" rx="6" ry="7.5" fill="#d9a98e"/><path d="M7.2 9 C8.5 5 11 4 13.5 4 C16.5 4 18.5 5.5 19.3 9 C17 6.5 10 6.5 7.2 9 Z" fill="#090706"/><path d="M11 16 Q13.2 17.4 15.5 16" stroke="#c98a86" stroke-width="1" fill="none"/><path d="M0 29 V22.5 C2 21.8 4 22 5.2 23.5 V29 Z" fill="#b88060"/><path d="M22.5 29 V23 C24.5 22 27 21.8 29 22.5 V29 Z" fill="#b88060"/><path d="M5.5 29 C7 25.5 10 24.5 13 24.5 C16 24.5 19 25.5 22.5 29 Z" fill="#050505"/></g></svg></div><div class="t mt" style="left:935px;top:509.62px;font-size:17.3px">Amy...</div><div class="a" style="left:1020px;top:505px;width:65px;height:29px;border-radius:6px;background:#c6f5bd"></div><div class="a" style="left:1025px;top:509.5px;width:7px;height:19.5px;border-radius:3.5px;background:#43ab38"></div><div class="t mt" style="left:1040.5px;top:509.91999999999996px;font-size:16px;letter-spacing:0.4px">New</div><div class="t mt" style="left:1187px;top:509.62px;letter-spacing:0.3px">23/10/2025</div><div class="t mt" style="left:1317px;top:509.62px;letter-spacing:0.3px;color:#e03a4a">23/10/2025</div><div class="t mt" style="left:1447px;top:509.62px;letter-spacing:0.3px">20/10/2025</div><div class="a" style="left:315px;top:544px;width:1485px;height:1px;background:#e6e9f0"></div><div class="t " style="left:349px;top:559.8499999999999px;font-size:15.8px;color:#6b7ca0;width:20px;text-align:center">6</div><svg style="left:458.5px;top:561.5px" width="17" height="16"><path d="M2.3 0.8 H13.2 A1.5 1.5 0 0 1 14.7 2.3 V10.5 L10.5 14.7 H2.3 A1.5 1.5 0 0 1 0.8 13.2 V2.3 A1.5 1.5 0 0 1 2.3 0.8 Z" stroke="#1b2032" stroke-width="1.3" fill="none" stroke-linejoin="round"/><path d="M14.7 10.5 H10.5 V14.7" stroke="#1b2032" stroke-width="1.3" fill="none"/></svg><div class="t mt" style="left:486px;top:559.8499999999999px;letter-spacing:0.22px">Recurring Task 2025-10-23</div><svg style="left:746px;top:555px" width="22" height="24"><path d="M14 8 A7 7 0 0 0 3.6 14.2" stroke="#4e6189" stroke-width="1.6" fill="none"/><path d="M7.25 20.5 A7 7 0 0 0 17.4 13.6" stroke="#4e6189" stroke-width="1.6" fill="none"/><path d="M0.8 14 L6.6 14 L3.7 17.6 Z" fill="#4e6189"/><path d="M14.6 13.9 L20.3 13.9 L17.5 10.6 Z" fill="#4e6189"/></svg><div class="a" style="left:785px;top:555px;width:29px;height:29px;border-radius:8px;overflow:hidden;background:#d7d9d8"><svg style="left:0;top:0" width="100%" height="100%" viewBox="0 0 29 29" preserveAspectRatio="none"><g filter="url(#blr)"><rect width="29" height="29" fill="#e4e4e1"/><rect x="0" y="4.4" width="29" height="2.6" fill="#cbbda4"/><rect x="23" y="0" width="5" height="29" fill="#f3f3f1"/><rect x="1" y="9" width="4" height="14" fill="#d2d2cf"/><path d="M6 22 C4.5 17 5 8 8 4.5 C10 2 13 1.5 15 1.7 C18.5 1.5 21.5 3 22.5 6 C24 10 23.8 17 22.5 22 Z" fill="#2b211c"/><path d="M10 29 L11 17.5 L19.5 17.5 L20.5 29 Z" fill="#dcb49d"/><ellipse cx="15.4" cy="12" rx="4.4" ry="6.4" fill="#d6a88d"/><rect x="11" y="9" width="4.2" height="3.2" rx="1.2" stroke="#33261f" stroke-width="0.9" fill="none"/><rect x="15.8" y="9" width="4.2" height="3.2" rx="1.2" stroke="#33261f" stroke-width="0.9" fill="none"/><path d="M13 15 Q15.5 16.6 18 15" stroke="#f3e6df" stroke-width="1" fill="none"/><path d="M0 29 V26 C2 23 5 21.5 9.5 21 L14 29 Z" fill="#0fa898"/><path d="M18.8 21 C23 21.5 26 23 28 26 V29 H16.5 Z" fill="#0fa898"/></g></svg></div><div class="t mt" style="left:824px;top:559.8499999999999px;font-size:17.3px">Lisa S.</div><div class="a" style="left:896px;top:555px;width:29px;height:29px;border-radius:8px;overflow:hidden;background:#1a1614"><svg style="left:0;top:0" width="100%" height="100%" viewBox="0 0 29 29" preserveAspectRatio="none"><g filter="url(#blr)"><rect width="29" height="29" fill="#0c0908"/><rect x="0" y="6.2" width="5.5" height="15.8" fill="#c9d3de"/><path d="M0 11 H5.5 M0 16 H5.5" stroke="#56606b" stroke-width="1.2"/><path d="M21 12.5 L29 9.5 L29 12 L21 14.8 Z" fill="#8d8f94"/><path d="M5 29 C4.5 12 6.5 1 13 1 C20 1 22 12 21 29 Z" fill="#090706"/><ellipse cx="13.2" cy="12.3" rx="6" ry="7.5" fill="#d9a98e"/><path d="M7.2 9 C8.5 5 11 4 13.5 4 C16.5 4 18.5 5.5 19.3 9 C17 6.5 10 6.5 7.2 9 Z" fill="#090706"/><path d="M11 16 Q13.2 17.4 15.5 16" stroke="#c98a86" stroke-width="1" fill="none"/><path d="M0 29 V22.5 C2 21.8 4 22 5.2 23.5 V29 Z" fill="#b88060"/><path d="M22.5 29 V23 C24.5 22 27 21.8 29 22.5 V29 Z" fill="#b88060"/><path d="M5.5 29 C7 25.5 10 24.5 13 24.5 C16 24.5 19 25.5 22.5 29 Z" fill="#050505"/></g></svg></div><div class="t mt" style="left:935px;top:559.8499999999999px;font-size:17.3px">Amy...</div><div class="a" style="left:1020px;top:555px;width:65px;height:29px;border-radius:6px;background:#c6f5bd"></div><div class="a" style="left:1025px;top:559.5px;width:7px;height:19.5px;border-radius:3.5px;background:#43ab38"></div><div class="t mt" style="left:1040.5px;top:560.1499999999999px;font-size:16px;letter-spacing:0.4px">New</div><div class="t mt" style="left:1187px;top:559.8499999999999px;letter-spacing:0.3px">23/10/2025</div><div class="t mt" style="left:1317px;top:559.8499999999999px;letter-spacing:0.3px;color:#e03a4a">23/10/2025</div><div class="t mt" style="left:1447px;top:559.8499999999999px;letter-spacing:0.3px">20/10/2025</div><div class="a" style="left:315px;top:594px;width:1485px;height:1px;background:#e6e9f0"></div><div class="t " style="left:349px;top:610.0799999999999px;font-size:15.8px;color:#6b7ca0;width:20px;text-align:center">7</div><svg style="left:458.5px;top:611.5px" width="17" height="16"><path d="M2.3 0.8 H13.2 A1.5 1.5 0 0 1 14.7 2.3 V10.5 L10.5 14.7 H2.3 A1.5 1.5 0 0 1 0.8 13.2 V2.3 A1.5 1.5 0 0 1 2.3 0.8 Z" stroke="#1b2032" stroke-width="1.3" fill="none" stroke-linejoin="round"/><path d="M14.7 10.5 H10.5 V14.7" stroke="#1b2032" stroke-width="1.3" fill="none"/></svg><div class="t mt" style="left:486px;top:610.0799999999999px;letter-spacing:0.22px">Recurring Task 2025-10-23</div><svg style="left:746px;top:605px" width="22" height="24"><path d="M14 8 A7 7 0 0 0 3.6 14.2" stroke="#4e6189" stroke-width="1.6" fill="none"/><path d="M7.25 20.5 A7 7 0 0 0 17.4 13.6" stroke="#4e6189" stroke-width="1.6" fill="none"/><path d="M0.8 14 L6.6 14 L3.7 17.6 Z" fill="#4e6189"/><path d="M14.6 13.9 L20.3 13.9 L17.5 10.6 Z" fill="#4e6189"/></svg><div class="a" style="left:785px;top:605px;width:29px;height:29px;border-radius:8px;overflow:hidden;background:#d7d9d8"><svg style="left:0;top:0" width="100%" height="100%" viewBox="0 0 29 29" preserveAspectRatio="none"><g filter="url(#blr)"><rect width="29" height="29" fill="#e4e4e1"/><rect x="0" y="4.4" width="29" height="2.6" fill="#cbbda4"/><rect x="23" y="0" width="5" height="29" fill="#f3f3f1"/><rect x="1" y="9" width="4" height="14" fill="#d2d2cf"/><path d="M6 22 C4.5 17 5 8 8 4.5 C10 2 13 1.5 15 1.7 C18.5 1.5 21.5 3 22.5 6 C24 10 23.8 17 22.5 22 Z" fill="#2b211c"/><path d="M10 29 L11 17.5 L19.5 17.5 L20.5 29 Z" fill="#dcb49d"/><ellipse cx="15.4" cy="12" rx="4.4" ry="6.4" fill="#d6a88d"/><rect x="11" y="9" width="4.2" height="3.2" rx="1.2" stroke="#33261f" stroke-width="0.9" fill="none"/><rect x="15.8" y="9" width="4.2" height="3.2" rx="1.2" stroke="#33261f" stroke-width="0.9" fill="none"/><path d="M13 15 Q15.5 16.6 18 15" stroke="#f3e6df" stroke-width="1" fill="none"/><path d="M0 29 V26 C2 23 5 21.5 9.5 21 L14 29 Z" fill="#0fa898"/><path d="M18.8 21 C23 21.5 26 23 28 26 V29 H16.5 Z" fill="#0fa898"/></g></svg></div><div class="t mt" style="left:824px;top:610.0799999999999px;font-size:17.3px">Lisa S.</div><div class="a" style="left:896px;top:605px;width:29px;height:29px;border-radius:8px;overflow:hidden;background:#1a1614"><svg style="left:0;top:0" width="100%" height="100%" viewBox="0 0 29 29" preserveAspectRatio="none"><g filter="url(#blr)"><rect width="29" height="29" fill="#0c0908"/><rect x="0" y="6.2" width="5.5" height="15.8" fill="#c9d3de"/><path d="M0 11 H5.5 M0 16 H5.5" stroke="#56606b" stroke-width="1.2"/><path d="M21 12.5 L29 9.5 L29 12 L21 14.8 Z" fill="#8d8f94"/><path d="M5 29 C4.5 12 6.5 1 13 1 C20 1 22 12 21 29 Z" fill="#090706"/><ellipse cx="13.2" cy="12.3" rx="6" ry="7.5" fill="#d9a98e"/><path d="M7.2 9 C8.5 5 11 4 13.5 4 C16.5 4 18.5 5.5 19.3 9 C17 6.5 10 6.5 7.2 9 Z" fill="#090706"/><path d="M11 16 Q13.2 17.4 15.5 16" stroke="#c98a86" stroke-width="1" fill="none"/><path d="M0 29 V22.5 C2 21.8 4 22 5.2 23.5 V29 Z" fill="#b88060"/><path d="M22.5 29 V23 C24.5 22 27 21.8 29 22.5 V29 Z" fill="#b88060"/><path d="M5.5 29 C7 25.5 10 24.5 13 24.5 C16 24.5 19 25.5 22.5 29 Z" fill="#050505"/></g></svg></div><div class="t mt" style="left:935px;top:610.0799999999999px;font-size:17.3px">Amy...</div><div class="a" style="left:1020px;top:605px;width:65px;height:29px;border-radius:6px;background:#c6f5bd"></div><div class="a" style="left:1025px;top:609.5px;width:7px;height:19.5px;border-radius:3.5px;background:#43ab38"></div><div class="t mt" style="left:1040.5px;top:610.3799999999999px;font-size:16px;letter-spacing:0.4px">New</div><div class="t mt" style="left:1187px;top:610.0799999999999px;letter-spacing:0.3px">23/10/2025</div><div class="t mt" style="left:1317px;top:610.0799999999999px;letter-spacing:0.3px;color:#e03a4a">23/10/2025</div><div class="t mt" style="left:1447px;top:610.0799999999999px;letter-spacing:0.3px">20/10/2025</div><div class="a" style="left:315px;top:644px;width:1485px;height:1px;background:#e6e9f0"></div><div class="t " style="left:349px;top:660.31px;font-size:15.8px;color:#6b7ca0;width:20px;text-align:center">8</div><svg style="left:458.5px;top:661.5px" width="17" height="16"><path d="M2.3 0.8 H13.2 A1.5 1.5 0 0 1 14.7 2.3 V10.5 L10.5 14.7 H2.3 A1.5 1.5 0 0 1 0.8 13.2 V2.3 A1.5 1.5 0 0 1 2.3 0.8 Z" stroke="#1b2032" stroke-width="1.3" fill="none" stroke-linejoin="round"/><path d="M14.7 10.5 H10.5 V14.7" stroke="#1b2032" stroke-width="1.3" fill="none"/></svg><div class="t mt" style="left:486px;top:660.31px;letter-spacing:0.22px">Recurring Task 2025-10-22</div><svg style="left:746px;top:655px" width="22" height="24"><path d="M14 8 A7 7 0 0 0 3.6 14.2" stroke="#4e6189" stroke-width="1.6" fill="none"/><path d="M7.25 20.5 A7 7 0 0 0 17.4 13.6" stroke="#4e6189" stroke-width="1.6" fill="none"/><path d="M0.8 14 L6.6 14 L3.7 17.6 Z" fill="#4e6189"/><path d="M14.6 13.9 L20.3 13.9 L17.5 10.6 Z" fill="#4e6189"/></svg><div class="a" style="left:785px;top:655px;width:29px;height:29px;border-radius:8px;overflow:hidden;background:#d7d9d8"><svg style="left:0;top:0" width="100%" height="100%" viewBox="0 0 29 29" preserveAspectRatio="none"><g filter="url(#blr)"><rect width="29" height="29" fill="#e4e4e1"/><rect x="0" y="4.4" width="29" height="2.6" fill="#cbbda4"/><rect x="23" y="0" width="5" height="29" fill="#f3f3f1"/><rect x="1" y="9" width="4" height="14" fill="#d2d2cf"/><path d="M6 22 C4.5 17 5 8 8 4.5 C10 2 13 1.5 15 1.7 C18.5 1.5 21.5 3 22.5 6 C24 10 23.8 17 22.5 22 Z" fill="#2b211c"/><path d="M10 29 L11 17.5 L19.5 17.5 L20.5 29 Z" fill="#dcb49d"/><ellipse cx="15.4" cy="12" rx="4.4" ry="6.4" fill="#d6a88d"/><rect x="11" y="9" width="4.2" height="3.2" rx="1.2" stroke="#33261f" stroke-width="0.9" fill="none"/><rect x="15.8" y="9" width="4.2" height="3.2" rx="1.2" stroke="#33261f" stroke-width="0.9" fill="none"/><path d="M13 15 Q15.5 16.6 18 15" stroke="#f3e6df" stroke-width="1" fill="none"/><path d="M0 29 V26 C2 23 5 21.5 9.5 21 L14 29 Z" fill="#0fa898"/><path d="M18.8 21 C23 21.5 26 23 28 26 V29 H16.5 Z" fill="#0fa898"/></g></svg></div><div class="t mt" style="left:824px;top:660.31px;font-size:17.3px">Lisa S.</div><div class="a" style="left:896px;top:655px;width:29px;height:29px;border-radius:8px;overflow:hidden;background:#1a1614"><svg style="left:0;top:0" width="100%" height="100%" viewBox="0 0 29 29" preserveAspectRatio="none"><g filter="url(#blr)"><rect width="29" height="29" fill="#0c0908"/><rect x="0" y="6.2" width="5.5" height="15.8" fill="#c9d3de"/><path d="M0 11 H5.5 M0 16 H5.5" stroke="#56606b" stroke-width="1.2"/><path d="M21 12.5 L29 9.5 L29 12 L21 14.8 Z" fill="#8d8f94"/><path d="M5 29 C4.5 12 6.5 1 13 1 C20 1 22 12 21 29 Z" fill="#090706"/><ellipse cx="13.2" cy="12.3" rx="6" ry="7.5" fill="#d9a98e"/><path d="M7.2 9 C8.5 5 11 4 13.5 4 C16.5 4 18.5 5.5 19.3 9 C17 6.5 10 6.5 7.2 9 Z" fill="#090706"/><path d="M11 16 Q13.2 17.4 15.5 16" stroke="#c98a86" stroke-width="1" fill="none"/><path d="M0 29 V22.5 C2 21.8 4 22 5.2 23.5 V29 Z" fill="#b88060"/><path d="M22.5 29 V23 C24.5 22 27 21.8 29 22.5 V29 Z" fill="#b88060"/><path d="M5.5 29 C7 25.5 10 24.5 13 24.5 C16 24.5 19 25.5 22.5 29 Z" fill="#050505"/></g></svg></div><div class="t mt" style="left:935px;top:660.31px;font-size:17.3px">Amy...</div><div class="a" style="left:1020px;top:655px;width:65px;height:29px;border-radius:6px;background:#c6f5bd"></div><div class="a" style="left:1025px;top:659.5px;width:7px;height:19.5px;border-radius:3.5px;background:#43ab38"></div><div class="t mt" style="left:1040.5px;top:660.6099999999999px;font-size:16px;letter-spacing:0.4px">New</div><div class="t mt" style="left:1187px;top:660.31px;letter-spacing:0.3px">22/10/2025</div><div class="t mt" style="left:1317px;top:660.31px;letter-spacing:0.3px;color:#e03a4a">22/10/2025</div><div class="t mt" style="left:1447px;top:660.31px;letter-spacing:0.3px">20/10/2025</div><div class="a" style="left:315px;top:694px;width:1485px;height:1px;background:#e6e9f0"></div><div class="t " style="left:349px;top:710.54px;font-size:15.8px;color:#6b7ca0;width:20px;text-align:center">9</div><svg style="left:458.5px;top:711.5px" width="17" height="16"><path d="M2.3 0.8 H13.2 A1.5 1.5 0 0 1 14.7 2.3 V10.5 L10.5 14.7 H2.3 A1.5 1.5 0 0 1 0.8 13.2 V2.3 A1.5 1.5 0 0 1 2.3 0.8 Z" stroke="#1b2032" stroke-width="1.3" fill="none" stroke-linejoin="round"/><path d="M14.7 10.5 H10.5 V14.7" stroke="#1b2032" stroke-width="1.3" fill="none"/></svg><div class="t mt" style="left:486px;top:710.54px;letter-spacing:0.22px">Recurring Task 2025-10-22</div><svg style="left:746px;top:705px" width="22" height="24"><path d="M14 8 A7 7 0 0 0 3.6 14.2" stroke="#4e6189" stroke-width="1.6" fill="none"/><path d="M7.25 20.5 A7 7 0 0 0 17.4 13.6" stroke="#4e6189" stroke-width="1.6" fill="none"/><path d="M0.8 14 L6.6 14 L3.7 17.6 Z" fill="#4e6189"/><path d="M14.6 13.9 L20.3 13.9 L17.5 10.6 Z" fill="#4e6189"/></svg><div class="a" style="left:785px;top:705px;width:29px;height:29px;border-radius:8px;overflow:hidden;background:#d7d9d8"><svg style="left:0;top:0" width="100%" height="100%" viewBox="0 0 29 29" preserveAspectRatio="none"><g filter="url(#blr)"><rect width="29" height="29" fill="#e4e4e1"/><rect x="0" y="4.4" width="29" height="2.6" fill="#cbbda4"/><rect x="23" y="0" width="5" height="29" fill="#f3f3f1"/><rect x="1" y="9" width="4" height="14" fill="#d2d2cf"/><path d="M6 22 C4.5 17 5 8 8 4.5 C10 2 13 1.5 15 1.7 C18.5 1.5 21.5 3 22.5 6 C24 10 23.8 17 22.5 22 Z" fill="#2b211c"/><path d="M10 29 L11 17.5 L19.5 17.5 L20.5 29 Z" fill="#dcb49d"/><ellipse cx="15.4" cy="12" rx="4.4" ry="6.4" fill="#d6a88d"/><rect x="11" y="9" width="4.2" height="3.2" rx="1.2" stroke="#33261f" stroke-width="0.9" fill="none"/><rect x="15.8" y="9" width="4.2" height="3.2" rx="1.2" stroke="#33261f" stroke-width="0.9" fill="none"/><path d="M13 15 Q15.5 16.6 18 15" stroke="#f3e6df" stroke-width="1" fill="none"/><path d="M0 29 V26 C2 23 5 21.5 9.5 21 L14 29 Z" fill="#0fa898"/><path d="M18.8 21 C23 21.5 26 23 28 26 V29 H16.5 Z" fill="#0fa898"/></g></svg></div><div class="t mt" style="left:824px;top:710.54px;font-size:17.3px">Lisa S.</div><div class="a" style="left:896px;top:705px;width:29px;height:29px;border-radius:8px;overflow:hidden;background:#1a1614"><svg style="left:0;top:0" width="100%" height="100%" viewBox="0 0 29 29" preserveAspectRatio="none"><g filter="url(#blr)"><rect width="29" height="29" fill="#0c0908"/><rect x="0" y="6.2" width="5.5" height="15.8" fill="#c9d3de"/><path d="M0 11 H5.5 M0 16 H5.5" stroke="#56606b" stroke-width="1.2"/><path d="M21 12.5 L29 9.5 L29 12 L21 14.8 Z" fill="#8d8f94"/><path d="M5 29 C4.5 12 6.5 1 13 1 C20 1 22 12 21 29 Z" fill="#090706"/><ellipse cx="13.2" cy="12.3" rx="6" ry="7.5" fill="#d9a98e"/><path d="M7.2 9 C8.5 5 11 4 13.5 4 C16.5 4 18.5 5.5 19.3 9 C17 6.5 10 6.5 7.2 9 Z" fill="#090706"/><path d="M11 16 Q13.2 17.4 15.5 16" stroke="#c98a86" stroke-width="1" fill="none"/><path d="M0 29 V22.5 C2 21.8 4 22 5.2 23.5 V29 Z" fill="#b88060"/><path d="M22.5 29 V23 C24.5 22 27 21.8 29 22.5 V29 Z" fill="#b88060"/><path d="M5.5 29 C7 25.5 10 24.5 13 24.5 C16 24.5 19 25.5 22.5 29 Z" fill="#050505"/></g></svg></div><div class="t mt" style="left:935px;top:710.54px;font-size:17.3px">Amy...</div><div class="a" style="left:1020px;top:705px;width:65px;height:29px;border-radius:6px;background:#c6f5bd"></div><div class="a" style="left:1025px;top:709.5px;width:7px;height:19.5px;border-radius:3.5px;background:#43ab38"></div><div class="t mt" style="left:1040.5px;top:710.8399999999999px;font-size:16px;letter-spacing:0.4px">New</div><div class="t mt" style="left:1187px;top:710.54px;letter-spacing:0.3px">22/10/2025</div><div class="t mt" style="left:1317px;top:710.54px;letter-spacing:0.3px;color:#e03a4a">22/10/2025</div><div class="t mt" style="left:1447px;top:710.54px;letter-spacing:0.3px">20/10/2025</div><div class="a" style="left:315px;top:744px;width:1485px;height:1px;background:#e6e9f0"></div><div class="t " style="left:349px;top:760.77px;font-size:15.8px;color:#6b7ca0;width:20px;text-align:center">10</div><svg style="left:458.5px;top:762.5px" width="17" height="16"><path d="M2.3 0.8 H13.2 A1.5 1.5 0 0 1 14.7 2.3 V10.5 L10.5 14.7 H2.3 A1.5 1.5 0 0 1 0.8 13.2 V2.3 A1.5 1.5 0 0 1 2.3 0.8 Z" stroke="#1b2032" stroke-width="1.3" fill="none" stroke-linejoin="round"/><path d="M14.7 10.5 H10.5 V14.7" stroke="#1b2032" stroke-width="1.3" fill="none"/></svg><div class="t mt" style="left:486px;top:760.77px;letter-spacing:0.22px">Recurring Task 2025-10-21</div><svg style="left:746px;top:756px" width="22" height="24"><path d="M14 8 A7 7 0 0 0 3.6 14.2" stroke="#4e6189" stroke-width="1.6" fill="none"/><path d="M7.25 20.5 A7 7 0 0 0 17.4 13.6" stroke="#4e6189" stroke-width="1.6" fill="none"/><path d="M0.8 14 L6.6 14 L3.7 17.6 Z" fill="#4e6189"/><path d="M14.6 13.9 L20.3 13.9 L17.5 10.6 Z" fill="#4e6189"/></svg><div class="a" style="left:785px;top:756px;width:29px;height:29px;border-radius:8px;overflow:hidden;background:#d7d9d8"><svg style="left:0;top:0" width="100%" height="100%" viewBox="0 0 29 29" preserveAspectRatio="none"><g filter="url(#blr)"><rect width="29" height="29" fill="#e4e4e1"/><rect x="0" y="4.4" width="29" height="2.6" fill="#cbbda4"/><rect x="23" y="0" width="5" height="29" fill="#f3f3f1"/><rect x="1" y="9" width="4" height="14" fill="#d2d2cf"/><path d="M6 22 C4.5 17 5 8 8 4.5 C10 2 13 1.5 15 1.7 C18.5 1.5 21.5 3 22.5 6 C24 10 23.8 17 22.5 22 Z" fill="#2b211c"/><path d="M10 29 L11 17.5 L19.5 17.5 L20.5 29 Z" fill="#dcb49d"/><ellipse cx="15.4" cy="12" rx="4.4" ry="6.4" fill="#d6a88d"/><rect x="11" y="9" width="4.2" height="3.2" rx="1.2" stroke="#33261f" stroke-width="0.9" fill="none"/><rect x="15.8" y="9" width="4.2" height="3.2" rx="1.2" stroke="#33261f" stroke-width="0.9" fill="none"/><path d="M13 15 Q15.5 16.6 18 15" stroke="#f3e6df" stroke-width="1" fill="none"/><path d="M0 29 V26 C2 23 5 21.5 9.5 21 L14 29 Z" fill="#0fa898"/><path d="M18.8 21 C23 21.5 26 23 28 26 V29 H16.5 Z" fill="#0fa898"/></g></svg></div><div class="t mt" style="left:824px;top:760.77px;font-size:17.3px">Lisa S.</div><div class="a" style="left:896px;top:756px;width:29px;height:29px;border-radius:8px;overflow:hidden;background:#1a1614"><svg style="left:0;top:0" width="100%" height="100%" viewBox="0 0 29 29" preserveAspectRatio="none"><g filter="url(#blr)"><rect width="29" height="29" fill="#0c0908"/><rect x="0" y="6.2" width="5.5" height="15.8" fill="#c9d3de"/><path d="M0 11 H5.5 M0 16 H5.5" stroke="#56606b" stroke-width="1.2"/><path d="M21 12.5 L29 9.5 L29 12 L21 14.8 Z" fill="#8d8f94"/><path d="M5 29 C4.5 12 6.5 1 13 1 C20 1 22 12 21 29 Z" fill="#090706"/><ellipse cx="13.2" cy="12.3" rx="6" ry="7.5" fill="#d9a98e"/><path d="M7.2 9 C8.5 5 11 4 13.5 4 C16.5 4 18.5 5.5 19.3 9 C17 6.5 10 6.5 7.2 9 Z" fill="#090706"/><path d="M11 16 Q13.2 17.4 15.5 16" stroke="#c98a86" stroke-width="1" fill="none"/><path d="M0 29 V22.5 C2 21.8 4 22 5.2 23.5 V29 Z" fill="#b88060"/><path d="M22.5 29 V23 C24.5 22 27 21.8 29 22.5 V29 Z" fill="#b88060"/><path d="M5.5 29 C7 25.5 10 24.5 13 24.5 C16 24.5 19 25.5 22.5 29 Z" fill="#050505"/></g></svg></div><div class="t mt" style="left:935px;top:760.77px;font-size:17.3px">Amy...</div><div class="a" style="left:1020px;top:756px;width:65px;height:29px;border-radius:6px;background:#c6f5bd"></div><div class="a" style="left:1025px;top:760.5px;width:7px;height:19.5px;border-radius:3.5px;background:#43ab38"></div><div class="t mt" style="left:1040.5px;top:761.0699999999999px;font-size:16px;letter-spacing:0.4px">New</div><div class="t mt" style="left:1187px;top:760.77px;letter-spacing:0.3px">21/10/2025</div><div class="t mt" style="left:1317px;top:760.77px;letter-spacing:0.3px;color:#e03a4a">21/10/2025</div><div class="t mt" style="left:1447px;top:760.77px;letter-spacing:0.3px">20/10/2025</div><div class="a" style="left:315px;top:795px;width:1485px;height:1px;background:#e6e9f0"></div><div class="t " style="left:349px;top:811.0px;font-size:15.8px;color:#6b7ca0;width:20px;text-align:center">11</div><svg style="left:458.5px;top:812.5px" width="17" height="16"><path d="M2.3 0.8 H13.2 A1.5 1.5 0 0 1 14.7 2.3 V10.5 L10.5 14.7 H2.3 A1.5 1.5 0 0 1 0.8 13.2 V2.3 A1.5 1.5 0 0 1 2.3 0.8 Z" stroke="#1b2032" stroke-width="1.3" fill="none" stroke-linejoin="round"/><path d="M14.7 10.5 H10.5 V14.7" stroke="#1b2032" stroke-width="1.3" fill="none"/></svg><div class="t mt" style="left:486px;top:811.0px;letter-spacing:0.22px">Recurring Task 2025-10-20</div><svg style="left:746px;top:806px" width="22" height="24"><path d="M14 8 A7 7 0 0 0 3.6 14.2" stroke="#4e6189" stroke-width="1.6" fill="none"/><path d="M7.25 20.5 A7 7 0 0 0 17.4 13.6" stroke="#4e6189" stroke-width="1.6" fill="none"/><path d="M0.8 14 L6.6 14 L3.7 17.6 Z" fill="#4e6189"/><path d="M14.6 13.9 L20.3 13.9 L17.5 10.6 Z" fill="#4e6189"/></svg><div class="a" style="left:785px;top:806px;width:29px;height:29px;border-radius:8px;overflow:hidden;background:#d7d9d8"><svg style="left:0;top:0" width="100%" height="100%" viewBox="0 0 29 29" preserveAspectRatio="none"><g filter="url(#blr)"><rect width="29" height="29" fill="#e4e4e1"/><rect x="0" y="4.4" width="29" height="2.6" fill="#cbbda4"/><rect x="23" y="0" width="5" height="29" fill="#f3f3f1"/><rect x="1" y="9" width="4" height="14" fill="#d2d2cf"/><path d="M6 22 C4.5 17 5 8 8 4.5 C10 2 13 1.5 15 1.7 C18.5 1.5 21.5 3 22.5 6 C24 10 23.8 17 22.5 22 Z" fill="#2b211c"/><path d="M10 29 L11 17.5 L19.5 17.5 L20.5 29 Z" fill="#dcb49d"/><ellipse cx="15.4" cy="12" rx="4.4" ry="6.4" fill="#d6a88d"/><rect x="11" y="9" width="4.2" height="3.2" rx="1.2" stroke="#33261f" stroke-width="0.9" fill="none"/><rect x="15.8" y="9" width="4.2" height="3.2" rx="1.2" stroke="#33261f" stroke-width="0.9" fill="none"/><path d="M13 15 Q15.5 16.6 18 15" stroke="#f3e6df" stroke-width="1" fill="none"/><path d="M0 29 V26 C2 23 5 21.5 9.5 21 L14 29 Z" fill="#0fa898"/><path d="M18.8 21 C23 21.5 26 23 28 26 V29 H16.5 Z" fill="#0fa898"/></g></svg></div><div class="t mt" style="left:824px;top:811.0px;font-size:17.3px">Lisa S.</div><div class="a" style="left:896px;top:806px;width:29px;height:29px;border-radius:8px;overflow:hidden;background:#1a1614"><svg style="left:0;top:0" width="100%" height="100%" viewBox="0 0 29 29" preserveAspectRatio="none"><g filter="url(#blr)"><rect width="29" height="29" fill="#0c0908"/><rect x="0" y="6.2" width="5.5" height="15.8" fill="#c9d3de"/><path d="M0 11 H5.5 M0 16 H5.5" stroke="#56606b" stroke-width="1.2"/><path d="M21 12.5 L29 9.5 L29 12 L21 14.8 Z" fill="#8d8f94"/><path d="M5 29 C4.5 12 6.5 1 13 1 C20 1 22 12 21 29 Z" fill="#090706"/><ellipse cx="13.2" cy="12.3" rx="6" ry="7.5" fill="#d9a98e"/><path d="M7.2 9 C8.5 5 11 4 13.5 4 C16.5 4 18.5 5.5 19.3 9 C17 6.5 10 6.5 7.2 9 Z" fill="#090706"/><path d="M11 16 Q13.2 17.4 15.5 16" stroke="#c98a86" stroke-width="1" fill="none"/><path d="M0 29 V22.5 C2 21.8 4 22 5.2 23.5 V29 Z" fill="#b88060"/><path d="M22.5 29 V23 C24.5 22 27 21.8 29 22.5 V29 Z" fill="#b88060"/><path d="M5.5 29 C7 25.5 10 24.5 13 24.5 C16 24.5 19 25.5 22.5 29 Z" fill="#050505"/></g></svg></div><div class="t mt" style="left:935px;top:811.0px;font-size:17.3px">Amy...</div><div class="a" style="left:1020px;top:806px;width:65px;height:29px;border-radius:6px;background:#c6f5bd"></div><div class="a" style="left:1025px;top:810.5px;width:7px;height:19.5px;border-radius:3.5px;background:#43ab38"></div><div class="t mt" style="left:1040.5px;top:811.3px;font-size:16px;letter-spacing:0.4px">New</div><div class="t mt" style="left:1187px;top:811.0px;letter-spacing:0.3px">20/10/2025</div><div class="t mt" style="left:1317px;top:811.0px;letter-spacing:0.3px;color:#e03a4a">20/10/2025</div><div class="t mt" style="left:1447px;top:811.0px;letter-spacing:0.3px">17/10/2025</div><div class="a" style="left:315px;top:845px;width:1485px;height:1px;background:#e6e9f0"></div><div class="t " style="left:349px;top:861.23px;font-size:15.8px;color:#6b7ca0;width:20px;text-align:center">12</div><svg style="left:458.5px;top:862.5px" width="17" height="16"><path d="M2.3 0.8 H13.2 A1.5 1.5 0 0 1 14.7 2.3 V10.5 L10.5 14.7 H2.3 A1.5 1.5 0 0 1 0.8 13.2 V2.3 A1.5 1.5 0 0 1 2.3 0.8 Z" stroke="#1b2032" stroke-width="1.3" fill="none" stroke-linejoin="round"/><path d="M14.7 10.5 H10.5 V14.7" stroke="#1b2032" stroke-width="1.3" fill="none"/></svg><div class="t mt" style="left:486px;top:861.23px;letter-spacing:0.22px">Recurring Task 2025-10-17</div><svg style="left:746px;top:856px" width="22" height="24"><path d="M14 8 A7 7 0 0 0 3.6 14.2" stroke="#4e6189" stroke-width="1.6" fill="none"/><path d="M7.25 20.5 A7 7 0 0 0 17.4 13.6" stroke="#4e6189" stroke-width="1.6" fill="none"/><path d="M0.8 14 L6.6 14 L3.7 17.6 Z" fill="#4e6189"/><path d="M14.6 13.9 L20.3 13.9 L17.5 10.6 Z" fill="#4e6189"/></svg><div class="a" style="left:785px;top:856px;width:29px;height:29px;border-radius:8px;overflow:hidden;background:#d7d9d8"><svg style="left:0;top:0" width="100%" height="100%" viewBox="0 0 29 29" preserveAspectRatio="none"><g filter="url(#blr)"><rect width="29" height="29" fill="#e4e4e1"/><rect x="0" y="4.4" width="29" height="2.6" fill="#cbbda4"/><rect x="23" y="0" width="5" height="29" fill="#f3f3f1"/><rect x="1" y="9" width="4" height="14" fill="#d2d2cf"/><path d="M6 22 C4.5 17 5 8 8 4.5 C10 2 13 1.5 15 1.7 C18.5 1.5 21.5 3 22.5 6 C24 10 23.8 17 22.5 22 Z" fill="#2b211c"/><path d="M10 29 L11 17.5 L19.5 17.5 L20.5 29 Z" fill="#dcb49d"/><ellipse cx="15.4" cy="12" rx="4.4" ry="6.4" fill="#d6a88d"/><rect x="11" y="9" width="4.2" height="3.2" rx="1.2" stroke="#33261f" stroke-width="0.9" fill="none"/><rect x="15.8" y="9" width="4.2" height="3.2" rx="1.2" stroke="#33261f" stroke-width="0.9" fill="none"/><path d="M13 15 Q15.5 16.6 18 15" stroke="#f3e6df" stroke-width="1" fill="none"/><path d="M0 29 V26 C2 23 5 21.5 9.5 21 L14 29 Z" fill="#0fa898"/><path d="M18.8 21 C23 21.5 26 23 28 26 V29 H16.5 Z" fill="#0fa898"/></g></svg></div><div class="t mt" style="left:824px;top:861.23px;font-size:17.3px">Lisa S.</div><div class="a" style="left:896px;top:856px;width:29px;height:29px;border-radius:8px;overflow:hidden;background:#1a1614"><svg style="left:0;top:0" width="100%" height="100%" viewBox="0 0 29 29" preserveAspectRatio="none"><g filter="url(#blr)"><rect width="29" height="29" fill="#0c0908"/><rect x="0" y="6.2" width="5.5" height="15.8" fill="#c9d3de"/><path d="M0 11 H5.5 M0 16 H5.5" stroke="#56606b" stroke-width="1.2"/><path d="M21 12.5 L29 9.5 L29 12 L21 14.8 Z" fill="#8d8f94"/><path d="M5 29 C4.5 12 6.5 1 13 1 C20 1 22 12 21 29 Z" fill="#090706"/><ellipse cx="13.2" cy="12.3" rx="6" ry="7.5" fill="#d9a98e"/><path d="M7.2 9 C8.5 5 11 4 13.5 4 C16.5 4 18.5 5.5 19.3 9 C17 6.5 10 6.5 7.2 9 Z" fill="#090706"/><path d="M11 16 Q13.2 17.4 15.5 16" stroke="#c98a86" stroke-width="1" fill="none"/><path d="M0 29 V22.5 C2 21.8 4 22 5.2 23.5 V29 Z" fill="#b88060"/><path d="M22.5 29 V23 C24.5 22 27 21.8 29 22.5 V29 Z" fill="#b88060"/><path d="M5.5 29 C7 25.5 10 24.5 13 24.5 C16 24.5 19 25.5 22.5 29 Z" fill="#050505"/></g></svg></div><div class="t mt" style="left:935px;top:861.23px;font-size:17.3px">Amy...</div><div class="a" style="left:1020px;top:856px;width:65px;height:29px;border-radius:6px;background:#c6f5bd"></div><div class="a" style="left:1025px;top:860.5px;width:7px;height:19.5px;border-radius:3.5px;background:#43ab38"></div><div class="t mt" style="left:1040.5px;top:861.53px;font-size:16px;letter-spacing:0.4px">New</div><div class="t mt" style="left:1187px;top:861.23px;letter-spacing:0.3px">17/10/2025</div><div class="t mt" style="left:1317px;top:861.23px;letter-spacing:0.3px;color:#e03a4a">17/10/2025</div><div class="t mt" style="left:1447px;top:861.23px;letter-spacing:0.3px">15/10/2025</div><div class="a" style="left:315px;top:895px;width:1485px;height:1px;background:#e6e9f0"></div><div class="t " style="left:349px;top:911.46px;font-size:15.8px;color:#6b7ca0;width:20px;text-align:center">13</div><svg style="left:458.5px;top:912.5px" width="17" height="16"><path d="M2.3 0.8 H13.2 A1.5 1.5 0 0 1 14.7 2.3 V10.5 L10.5 14.7 H2.3 A1.5 1.5 0 0 1 0.8 13.2 V2.3 A1.5 1.5 0 0 1 2.3 0.8 Z" stroke="#1b2032" stroke-width="1.3" fill="none" stroke-linejoin="round"/><path d="M14.7 10.5 H10.5 V14.7" stroke="#1b2032" stroke-width="1.3" fill="none"/></svg><div class="t mt" style="left:486px;top:911.46px;letter-spacing:0.22px">Recurring Task 2025-10-17</div><svg style="left:746px;top:906px" width="22" height="24"><path d="M14 8 A7 7 0 0 0 3.6 14.2" stroke="#4e6189" stroke-width="1.6" fill="none"/><path d="M7.25 20.5 A7 7 0 0 0 17.4 13.6" stroke="#4e6189" stroke-width="1.6" fill="none"/><path d="M0.8 14 L6.6 14 L3.7 17.6 Z" fill="#4e6189"/><path d="M14.6 13.9 L20.3 13.9 L17.5 10.6 Z" fill="#4e6189"/></svg><div class="a" style="left:785px;top:906px;width:29px;height:29px;border-radius:8px;overflow:hidden;background:#d7d9d8"><svg style="left:0;top:0" width="100%" height="100%" viewBox="0 0 29 29" preserveAspectRatio="none"><g filter="url(#blr)"><rect width="29" height="29" fill="#e4e4e1"/><rect x="0" y="4.4" width="29" height="2.6" fill="#cbbda4"/><rect x="23" y="0" width="5" height="29" fill="#f3f3f1"/><rect x="1" y="9" width="4" height="14" fill="#d2d2cf"/><path d="M6 22 C4.5 17 5 8 8 4.5 C10 2 13 1.5 15 1.7 C18.5 1.5 21.5 3 22.5 6 C24 10 23.8 17 22.5 22 Z" fill="#2b211c"/><path d="M10 29 L11 17.5 L19.5 17.5 L20.5 29 Z" fill="#dcb49d"/><ellipse cx="15.4" cy="12" rx="4.4" ry="6.4" fill="#d6a88d"/><rect x="11" y="9" width="4.2" height="3.2" rx="1.2" stroke="#33261f" stroke-width="0.9" fill="none"/><rect x="15.8" y="9" width="4.2" height="3.2" rx="1.2" stroke="#33261f" stroke-width="0.9" fill="none"/><path d="M13 15 Q15.5 16.6 18 15" stroke="#f3e6df" stroke-width="1" fill="none"/><path d="M0 29 V26 C2 23 5 21.5 9.5 21 L14 29 Z" fill="#0fa898"/><path d="M18.8 21 C23 21.5 26 23 28 26 V29 H16.5 Z" fill="#0fa898"/></g></svg></div><div class="t mt" style="left:824px;top:911.46px;font-size:17.3px">Lisa S.</div><div class="a" style="left:896px;top:906px;width:29px;height:29px;border-radius:8px;overflow:hidden;background:#1a1614"><svg style="left:0;top:0" width="100%" height="100%" viewBox="0 0 29 29" preserveAspectRatio="none"><g filter="url(#blr)"><rect width="29" height="29" fill="#0c0908"/><rect x="0" y="6.2" width="5.5" height="15.8" fill="#c9d3de"/><path d="M0 11 H5.5 M0 16 H5.5" stroke="#56606b" stroke-width="1.2"/><path d="M21 12.5 L29 9.5 L29 12 L21 14.8 Z" fill="#8d8f94"/><path d="M5 29 C4.5 12 6.5 1 13 1 C20 1 22 12 21 29 Z" fill="#090706"/><ellipse cx="13.2" cy="12.3" rx="6" ry="7.5" fill="#d9a98e"/><path d="M7.2 9 C8.5 5 11 4 13.5 4 C16.5 4 18.5 5.5 19.3 9 C17 6.5 10 6.5 7.2 9 Z" fill="#090706"/><path d="M11 16 Q13.2 17.4 15.5 16" stroke="#c98a86" stroke-width="1" fill="none"/><path d="M0 29 V22.5 C2 21.8 4 22 5.2 23.5 V29 Z" fill="#b88060"/><path d="M22.5 29 V23 C24.5 22 27 21.8 29 22.5 V29 Z" fill="#b88060"/><path d="M5.5 29 C7 25.5 10 24.5 13 24.5 C16 24.5 19 25.5 22.5 29 Z" fill="#050505"/></g></svg></div><div class="t mt" style="left:935px;top:911.46px;font-size:17.3px">Amy...</div><div class="a" style="left:1020px;top:906px;width:65px;height:29px;border-radius:6px;background:#c6f5bd"></div><div class="a" style="left:1025px;top:910.5px;width:7px;height:19.5px;border-radius:3.5px;background:#43ab38"></div><div class="t mt" style="left:1040.5px;top:911.76px;font-size:16px;letter-spacing:0.4px">New</div><div class="t mt" style="left:1187px;top:911.46px;letter-spacing:0.3px">17/10/2025</div><div class="t mt" style="left:1317px;top:911.46px;letter-spacing:0.3px;color:#e03a4a">17/10/2025</div><div class="t mt" style="left:1447px;top:911.46px;letter-spacing:0.3px">15/10/2025</div><div class="a" style="left:315px;top:945px;width:1485px;height:1px;background:#e6e9f0"></div><div class="a" style="left:315px;top:923px;width:1485px;height:7px;background:linear-gradient(rgba(240,242,248,0),rgba(232,235,243,0.7))"></div><div class="a" style="left:315px;top:930px;width:1487px;height:52px;background:#fff;border-top:1px solid #dfe2ea"></div><div class="a" style="left:341px;top:933px;width:211px;height:45.5px;border:3.5px solid #0ecf62;border-radius:8px"></div><svg style="left:398px;top:949px" width="16" height="16"><path d="M8 1 V15 M1 8 H15" stroke="#1b2032" stroke-width="1.4"/></svg><div class="t mt" style="left:426px;top:946px;font-size:17.5px">Item</div><div class="a" style="left:320.3px;top:138.0px;width:64px;height:64px;border-radius:50%;background:rgba(14,200,95,0.18)"></div><div class="a" style="left:330.05px;top:147.75px;width:44.5px;height:44.5px;border-radius:50%;background:#0acf62"></div><div class="t" style="left:330.05px;top:154.4px;width:44.5px;height:30px;line-height:30px;text-align:center;color:#fff;font-weight:bold;font-size:26.5px"></div><svg style="left:0;top:0" width="400" height="200"><path d="M352 161.4 H355 V179 H352 V165.4 L347.8 167 V164.2 Z" fill="#fff"/></svg><div class="a" style="left:320.0px;top:335.0px;width:67px;height:67px;border-radius:50%;background:rgba(14,200,95,0.18)"></div><div class="a" style="left:330.25px;top:345.25px;width:46.5px;height:46.5px;border-radius:50%;background:#0acf62"></div><div class="t" style="left:330.25px;top:352.9px;width:46.5px;height:30px;line-height:30px;text-align:center;color:#fff;font-weight:bold;font-size:26.5px">2</div><div class="a" style="left:274.0px;top:879.8px;width:70px;height:70px;border-radius:50%;background:rgba(14,200,95,0.18)"></div><div class="a" style="left:286.0px;top:891.8px;width:46px;height:46px;border-radius:50%;background:#0acf62"></div><div class="t" style="left:286.0px;top:899.1999999999999px;width:46px;height:30px;line-height:30px;text-align:center;color:#fff;font-weight:normal;font-size:26.5px">3</div></div></body></html>
